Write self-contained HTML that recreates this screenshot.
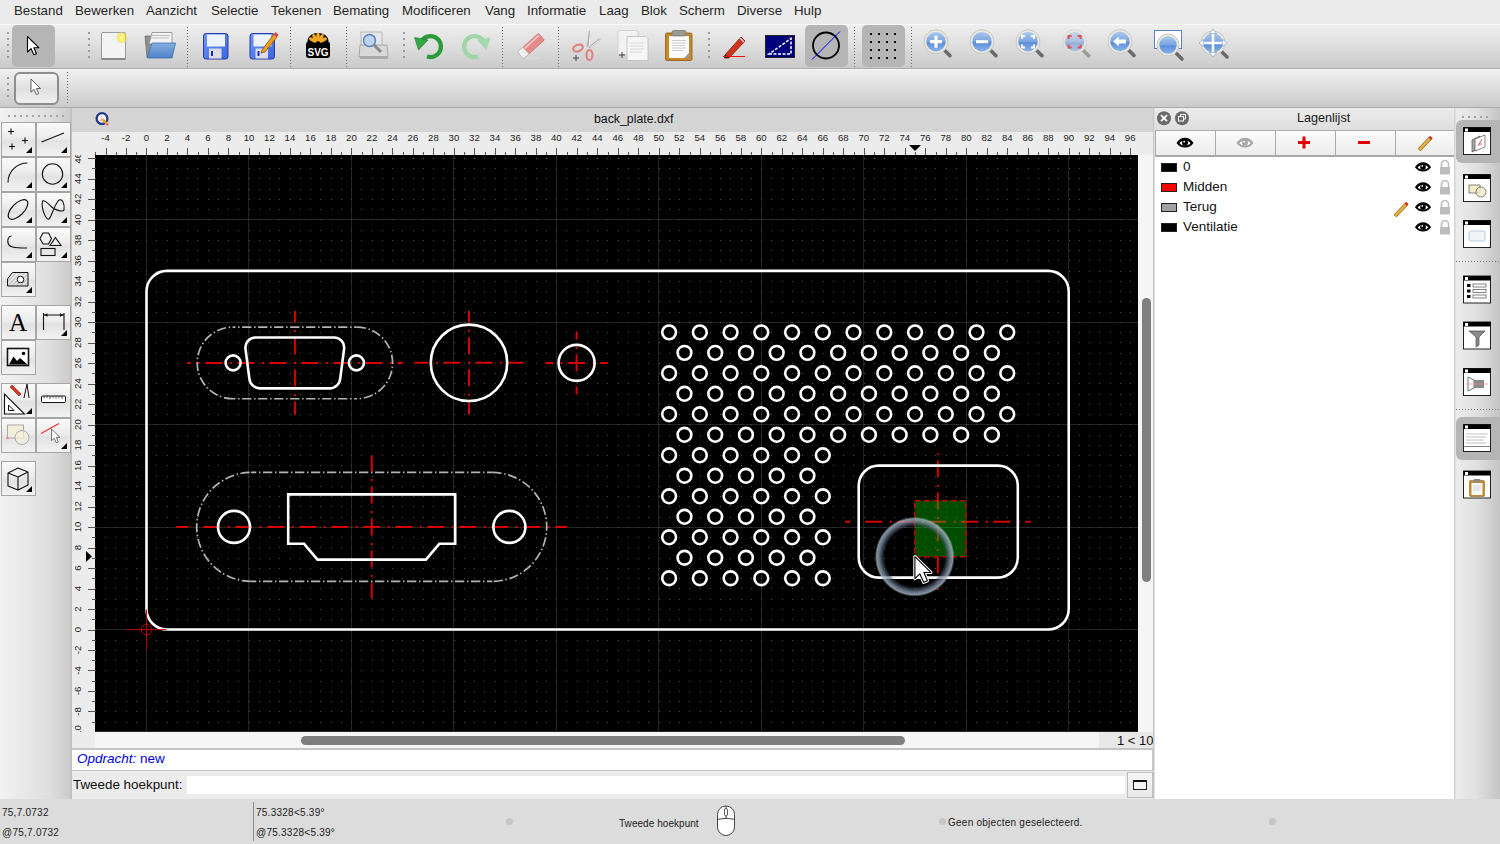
<!DOCTYPE html>
<html><head><meta charset="utf-8"><title>LibreCAD</title>
<style>
*{margin:0;padding:0;box-sizing:border-box}
html,body{width:1500px;height:844px;overflow:hidden;background:#ececec;font-family:"Liberation Sans",sans-serif;color:#111}
.a{position:absolute}
.menu{position:absolute;left:0;top:0;width:1500px;height:24px;background:#ebebeb}
.menu span{position:absolute;top:3px;font-size:13.3px;color:#262626}
.tb{position:absolute;left:0;width:1500px;background:linear-gradient(#eeeeee,#e3e3e3 35%,#cacaca);border-bottom:1px solid #aaaaaa;border-top:1px solid #f8f8f8}
.grip{position:absolute;width:2px;background:repeating-linear-gradient(#9c9c9c 0 2px,transparent 2px 6px)}
.sep{position:absolute;width:1px;background:repeating-linear-gradient(#6a6a6a 0 1px,transparent 1px 3px)}
.pressed{position:absolute;background:#b5b5b5;border-radius:5px}
.ic{position:absolute}
.lbtn{position:absolute;width:35px;height:35px;border:1px solid #a5a5a5;background:linear-gradient(#fafafa,#ececec 45%,#e2e2e2 55%,#f2f2f2)}
.tri:after{content:"";position:absolute;right:3px;bottom:3px;border-style:solid;border-width:0 0 6px 6px;border-color:transparent transparent #000 transparent}
.st{position:absolute;font-size:10px;color:#222;white-space:nowrap;letter-spacing:0.25px}
</style></head><body>
<div class="menu"><span style="left:14px">Bestand</span><span style="left:75px">Bewerken</span><span style="left:146px">Aanzicht</span><span style="left:211px">Selectie</span><span style="left:271px">Tekenen</span><span style="left:333px">Bemating</span><span style="left:402px">Modificeren</span><span style="left:485px">Vang</span><span style="left:527px">Informatie</span><span style="left:599px">Laag</span><span style="left:641px">Blok</span><span style="left:679px">Scherm</span><span style="left:737px">Diverse</span><span style="left:794px">Hulp</span></div><div class="tb" style="top:24px;height:45px"></div><div class="tb" style="top:69px;height:39px"></div><div class="grip" style="left:7px;top:32px;height:27px"></div><div class="grip" style="left:88px;top:32px;height:27px"></div><div class="grip" style="left:7px;top:77px;height:21px"></div><div class="sep" style="left:187px;top:27px;height:40px"></div><div class="sep" style="left:290px;top:27px;height:40px"></div><div class="sep" style="left:346px;top:27px;height:40px"></div><div class="sep" style="left:502px;top:27px;height:40px"></div><div class="sep" style="left:558px;top:27px;height:40px"></div><div class="sep" style="left:854px;top:27px;height:40px"></div><div class="sep" style="left:911px;top:27px;height:40px"></div><div class="grip" style="left:403px;top:32px;height:27px"></div><div class="grip" style="left:708px;top:32px;height:27px"></div><div class="sep" style="left:67px;top:72px;height:33px"></div><div class="pressed" style="left:12px;top:25px;width:43px;height:42px"></div><div class="pressed" style="left:805px;top:25px;width:43px;height:42px"></div><div class="pressed" style="left:862px;top:25px;width:43px;height:42px"></div><div class="a" style="left:14px;top:72px;width:45px;height:33px;border:2px solid #8e8e8e;border-radius:6px;background:linear-gradient(#f4f4f4,#e0e0e0 50%,#f0f0f0)"></div><svg class="a" style="left:0;top:24px" width="1500" height="84" viewBox="0 24 1500 84"><defs>
<linearGradient id="blue" x1="0" y1="0" x2="0" y2="1"><stop offset="0" stop-color="#a9c6ee"/><stop offset="0.5" stop-color="#7aa5e0"/><stop offset="0.55" stop-color="#5b8dd6"/><stop offset="1" stop-color="#8ab3ea"/></linearGradient>
<linearGradient id="flop" x1="0" y1="0" x2="1" y2="1"><stop offset="0" stop-color="#6f97f5"/><stop offset="1" stop-color="#3c64e0"/></linearGradient>
<linearGradient id="fold" x1="0" y1="0" x2="0" y2="1"><stop offset="0" stop-color="#86aee0"/><stop offset="1" stop-color="#4f82c8"/></linearGradient>
</defs><path transform="translate(27.5 36.5) scale(1.0)" d="M0 0V15.5L3.6 12.2L6.3 18.3L9 17.2L6.4 11.2H11.3Z" fill="#fff" stroke="#000" stroke-width="1.1" stroke-linejoin="round"/><path transform="translate(31 79) scale(0.85)" d="M0 0V15.5L3.6 12.2L6.3 18.3L9 17.2L6.4 11.2H11.3Z" fill="#fff" stroke="#444" stroke-width="1" stroke-linejoin="round"/><rect x="101.5" y="32.5" width="24" height="27" rx="1.5" fill="#f3f3f3" stroke="#9a9a9a"/><rect x="101.5" y="58" width="24" height="2" fill="#8a8a8a"/><circle cx="121.7" cy="37.7" r="5.5" fill="#f4e43a" opacity="0.55"/><circle cx="121.7" cy="37.7" r="3.2" fill="#f8f060"/><circle cx="121.7" cy="37.7" r="1.5" fill="#fffbd0"/><path d="M145 36H155L157 38V57H147Z" fill="#8f8f8f" stroke="#6e6e6e" stroke-width="0.8"/><path d="M152 32.5H172V44H149Z" fill="#f4f4f4" stroke="#8a8a8a" stroke-width="0.8"/><path d="M150 35.5H170M150 38H169" stroke="#bbb" stroke-width="1.2"/><path d="M152 43H175.5L172 58H147Z" fill="url(#fold)" stroke="#3f6fb0" stroke-width="0.8"/><rect x="203.5" y="33.5" width="24.5" height="25.5" rx="2.5" fill="url(#flop)" stroke="#2a3aa8" stroke-width="1"/><rect x="207" y="34.5" width="18" height="12" fill="#eef2fb"/><rect x="209" y="48.5" width="12.5" height="10" fill="#dcdde6"/><rect x="211" y="51" width="2" height="5" fill="#1a2ad0"/><rect x="250.0" y="33.5" width="24.5" height="25.5" rx="2.5" fill="url(#flop)" stroke="#2a3aa8" stroke-width="1"/><rect x="253.5" y="34.5" width="18" height="12" fill="#eef2fb"/><rect x="255.5" y="48.5" width="12.5" height="10" fill="#dcdde6"/><rect x="257.5" y="51" width="2" height="5" fill="#1a2ad0"/><path d="M262 50L274 34L277 37L265 52L261 53Z" fill="#f0a020" stroke="#8a4a10" stroke-width="0.8"/><path d="M274 34L277 37L278.5 35L275.5 32Z" fill="#e04040"/><ellipse cx="318" cy="41" rx="10.5" ry="8" fill="#000"/><rect x="306" y="41.5" width="24" height="16.5" rx="3" fill="#000"/><ellipse cx="318" cy="37" rx="1.8" ry="4.2" fill="#f5a623" transform="rotate(-60 318 43)"/><ellipse cx="318" cy="37" rx="1.8" ry="4.2" fill="#f5a623" transform="rotate(-30 318 43)"/><ellipse cx="318" cy="37" rx="1.8" ry="4.2" fill="#f5a623" transform="rotate(0 318 43)"/><ellipse cx="318" cy="37" rx="1.8" ry="4.2" fill="#f5a623" transform="rotate(30 318 43)"/><ellipse cx="318" cy="37" rx="1.8" ry="4.2" fill="#f5a623" transform="rotate(60 318 43)"/><text x="318" y="56" font-family="Liberation Sans, sans-serif" font-weight="bold" font-size="11.5" fill="#fff" text-anchor="middle" textLength="21" lengthAdjust="spacingAndGlyphs">SVG</text><rect x="361" y="32" width="21" height="14" fill="#e6e6e6" stroke="#aaa" stroke-width="0.8"/><path d="M360 45H387L388 57H359Z" fill="#d8d8d8" stroke="#999" stroke-width="0.8"/><rect x="360" y="56" width="28" height="3" fill="#aaa"/><circle cx="369.5" cy="40.5" r="6" fill="#bcd4f2" stroke="#5a80c0" stroke-width="1.5"/><path d="M374 45L381 52" stroke="#888" stroke-width="3"/><path d="M421 42A10.5 10.5 0 1 1 427 56.5" fill="none" stroke="#2a9a3a" stroke-width="4.2"/><path d="M414.5 37.5L428 40L418.5 50Z" fill="#35a845" stroke="#1e7a2a" stroke-width="0.6"/><path d="M484 42A10.5 10.5 0 1 0 478 56.5" fill="none" stroke="#9ed4a8" stroke-width="4.2"/><path d="M490.5 37.5L477 40L486.5 50Z" fill="#a6d8b0"/><g transform="rotate(-42 531 46)"><rect x="517" y="41.5" width="28" height="9" rx="1" fill="#e58a8a" stroke="#c97a7a" stroke-width="0.8"/><rect x="517" y="41.5" width="7" height="9" fill="#f2f2f2" stroke="#bbb" stroke-width="0.6"/><path d="M525 43.5H544" stroke="#f6c8c8" stroke-width="1.6"/></g><ellipse cx="533" cy="58" rx="9" ry="0.9" fill="#d8d8d8"/><path d="M590 31L588 47M600 39L589 48" stroke="#aaa" stroke-width="2.2"/><path d="M590.5 31L589 47M600 39.5L590 47.5" stroke="#f4f4f4" stroke-width="1"/><ellipse cx="578" cy="48" rx="5" ry="3.2" fill="none" stroke="#e08080" stroke-width="2.2" transform="rotate(-20 578 48)"/><ellipse cx="589.5" cy="55" rx="3" ry="5" fill="none" stroke="#e08080" stroke-width="2.2"/><path d="M573 58H579M576 55V61" stroke="#444" stroke-width="1"/><rect x="618" y="30.5" width="20" height="24" rx="1.5" fill="#f2f2f2" stroke="#ccc" stroke-width="0.8"/><path d="M627 36.5H646L648 38.5V60.5H627Z" fill="#f6f6f6" stroke="#bbb" stroke-width="0.8"/><path d="M630 43H644M630 46H644M630 49H644M630 52H642" stroke="#d0d0d0" stroke-width="0.8"/><path d="M619 55H625M622 52V58" stroke="#444" stroke-width="1"/><rect x="665.5" y="33" width="26.5" height="27.5" rx="1.5" fill="#c4892c" stroke="#8a5a10" stroke-width="0.8"/><rect x="669" y="36" width="20" height="22" fill="#fafafa"/><rect x="672" y="30.5" width="14" height="5.5" rx="1.5" fill="#9a9a90" stroke="#666" stroke-width="0.6"/><path d="M672 40.5H686M672 43H686M672 45.5H685M672 48H686M672 50.5H683" stroke="#c8c8c8" stroke-width="0.9"/><path d="M689 53L689 58L684 58Z" fill="#999"/><path d="M725 55L741 37L745 41L729 58L724.5 58Z" fill="#d63020" stroke="#7a2a10" stroke-width="0.9"/><path d="M724.5 58L725 54L729 58Z" fill="#222"/><path d="M740 38L744 42" stroke="#ddd" stroke-width="1.5"/><path d="M723 56.5H745" stroke="#f01010" stroke-width="1"/><rect x="765.5" y="35.5" width="29" height="22" fill="#00007d" stroke="#222" stroke-width="1"/><path d="M769 54H791V38.5Z" fill="none" stroke="#fff" stroke-width="1.5" stroke-dasharray="3 1.5"/><circle cx="826" cy="45.5" r="13" fill="none" stroke="#000" stroke-width="1.8"/><path d="M812 59.5L840 31.5" stroke="#0000ff" stroke-width="1"/><path d="M870 33h2v2h-2zM870 41h2v2h-2zM870 49h2v2h-2zM870 57h2v2h-2zM878 33h2v2h-2zM878 41h2v2h-2zM878 49h2v2h-2zM878 57h2v2h-2zM886 33h2v2h-2zM886 41h2v2h-2zM886 49h2v2h-2zM886 57h2v2h-2zM894 33h2v2h-2zM894 41h2v2h-2zM894 49h2v2h-2zM894 57h2v2h-2z" fill="#000"/><g><path d="M944 49.7L950 55.7" stroke="#6a6a6a" stroke-width="3.6" stroke-linecap="round"/><circle cx="936" cy="41.7" r="12.0" fill="#e8e8e0" stroke="#c8c8c0" stroke-width="1"/><circle cx="936" cy="41.7" r="9.7" fill="url(#blue)"/></g><path d="M930 41.7H942M936 35.7V47.7" stroke="#fff" stroke-width="3.2"/><g><path d="M990 49.7L996 55.7" stroke="#6a6a6a" stroke-width="3.6" stroke-linecap="round"/><circle cx="982" cy="41.7" r="12.0" fill="#e8e8e0" stroke="#c8c8c0" stroke-width="1"/><circle cx="982" cy="41.7" r="9.7" fill="url(#blue)"/></g><path d="M976 41.7H988" stroke="#fff" stroke-width="3"/><g><path d="M1036 49.7L1042 55.7" stroke="#6a6a6a" stroke-width="3.6" stroke-linecap="round"/><circle cx="1028" cy="41.7" r="12.0" fill="#e8e8e0" stroke="#c8c8c0" stroke-width="1"/><circle cx="1028" cy="41.7" r="9.7" fill="url(#blue)"/></g><path d="M1022 39V36H1025M1031 36H1034V39M1034 44.5V47.5H1031M1025 47.5H1022V44.5" fill="none" stroke="#fff" stroke-width="2"/><g opacity="0.55"><path d="M1082.6 49.7L1088.6 55.7" stroke="#6a6a6a" stroke-width="3.6" stroke-linecap="round"/><circle cx="1074.6" cy="41.7" r="12.0" fill="#e8e8e0" stroke="#c8c8c0" stroke-width="1"/><circle cx="1074.6" cy="41.7" r="9.7" fill="url(#blue)"/></g><path d="M1068.6 39V36H1071.6M1077.6 36H1080.6V39M1080.6 44.5V47.5H1077.6M1071.6 47.5H1068.6V44.5" fill="none" stroke="#e05050" stroke-width="2"/><g><path d="M1128 49.5L1134 55.5" stroke="#6a6a6a" stroke-width="3.6" stroke-linecap="round"/><circle cx="1120" cy="41.5" r="12.0" fill="#e8e8e0" stroke="#c8c8c0" stroke-width="1"/><circle cx="1120" cy="41.5" r="9.7" fill="url(#blue)"/></g><path d="M1113 41.5L1119 36.5V39.5H1126V43.5H1119V46.5Z" fill="#fff"/><rect x="1154.5" y="30.5" width="27" height="18" fill="#fff" stroke="#5a80c0" stroke-width="1"/><g><path d="M1176 53L1182 59" stroke="#6a6a6a" stroke-width="3.6" stroke-linecap="round"/><circle cx="1168" cy="45" r="11.0" fill="#e8e8e0" stroke="#c8c8c0" stroke-width="1"/><circle cx="1168" cy="45" r="8.7" fill="url(#blue)"/></g><g><path d="M1221 51L1227 57" stroke="#6a6a6a" stroke-width="3.6" stroke-linecap="round"/><circle cx="1213" cy="43" r="12.0" fill="#e8e8e0" stroke="#c8c8c0" stroke-width="1"/><circle cx="1213" cy="43" r="9.7" fill="url(#blue)"/></g><path d="M1213 30V56M1200 43H1226" stroke="#fff" stroke-width="2.5"/><path d="M1213 29L1209.5 33.5H1216.5ZM1213 57L1209.5 52.5H1216.5ZM1199 43L1203.5 39.5V46.5ZM1227 43L1222.5 39.5V46.5Z" fill="#fff" stroke="#6a90d0" stroke-width="0.6"/></svg><div class="a" style="left:0;top:108px;width:72px;height:691px;background:linear-gradient(90deg,#f2f2f2,#dedede 70%,#c9c9c9)"></div><div class="a" style="left:70px;top:108px;width:2px;height:691px;background:#c2c2c2"></div><div class="a" style="left:8px;top:115px;width:56px;height:2px;background:repeating-linear-gradient(90deg,#a4a4a4 0 2px,transparent 2px 6px)"></div><div class="lbtn tri" style="left:1px;top:122px"></div><div class="lbtn tri" style="left:36px;top:122px"></div><div class="lbtn tri" style="left:1px;top:157px"></div><div class="lbtn tri" style="left:36px;top:157px"></div><div class="lbtn tri" style="left:1px;top:192px"></div><div class="lbtn tri" style="left:36px;top:192px"></div><div class="lbtn tri" style="left:1px;top:227px"></div><div class="lbtn tri" style="left:36px;top:227px"></div><div class="lbtn tri" style="left:1px;top:262px"></div><div class="lbtn" style="left:1px;top:305px"></div><div class="lbtn tri" style="left:36px;top:305px"></div><div class="lbtn" style="left:1px;top:340px"></div><div class="lbtn tri" style="left:1px;top:383px"></div><div class="lbtn" style="left:36px;top:383px"></div><div class="lbtn" style="left:1px;top:418px"></div><div class="lbtn tri" style="left:36px;top:418px"></div><div class="lbtn tri" style="left:1px;top:461px"></div><svg class="a" style="left:0;top:100px" width="72" height="400" viewBox="0 100 72 400"><path d="M8 131.5H14M11 128.5V134.5M22 140.5H28M25 137.5V143.5M9 146.5H15M12 143.5V149.5" fill="none" stroke="#111" stroke-width="1.1"/><path d="M41.5 142L64 133" fill="none" stroke="#111" stroke-width="1.1"/><path d="M8 182.5A19.5 19.5 0 0 1 27.5 163" fill="none" stroke="#111" stroke-width="1.1"/><circle cx="52.5" cy="174" r="10.2" fill="none" stroke="#111" stroke-width="1.1"/><ellipse cx="18" cy="209.5" rx="12.5" ry="6" transform="rotate(-45 18 209.5)" fill="none" stroke="#111" stroke-width="1.1"/><path d="M42.5 201C41 208 46 221 49 219C52 216 53 208 58 201C62 197 65 204 64 210C63 212 58 211 53 208C50 206 45 199 42.5 201Z" fill="none" stroke="#111" stroke-width="1.1"/><path d="M11.5 236C8 236 7.5 240 8 243C9 247 13 248 27 248" fill="none" stroke="#111" stroke-width="1.1"/><path d="M43 233L48.5 233L51.5 238.5L48.5 244H43L40 238.5Z" fill="none" stroke="#111" stroke-width="1.1"/><path d="M55.5 237.5L61 245.5H50Z" fill="none" stroke="#111" stroke-width="1.1"/><rect x="41" y="248.5" width="14" height="7" fill="none" stroke="#111" stroke-width="1.1"/><defs><pattern id="hp" width="3" height="3" patternUnits="userSpaceOnUse" patternTransform="rotate(45)"><path d="M0 0V3" stroke="#666" stroke-width="0.7"/></pattern></defs><path d="M7.5 286H28V272.5H12.5L7.5 279Z" fill="url(#hp)" stroke="#111" stroke-width="1"/><circle cx="20.5" cy="279.5" r="3.3" fill="#fff" stroke="#111" stroke-width="1"/><text x="18" y="331" font-family="Liberation Serif, serif" font-size="25" text-anchor="middle" fill="#000">A</text><path d="M43.5 313V330M64 313V330M44 315H63.5" fill="none" stroke="#111" stroke-width="1.1"/><path d="M44 315L47.5 313.3V316.7ZM63.5 315L60 313.3V316.7Z" fill="#111"/><rect x="7.5" y="348.5" width="21" height="17" fill="#fff" stroke="#111" stroke-width="1.6"/><path d="M9 364.5L13.5 356.5L17 361L20 358L27.5 364.5Z" fill="#000"/><circle cx="23.5" cy="353.5" r="1.8" fill="#000"/><path d="M4.5 394V414H24.5Z" fill="#fff" stroke="#111" stroke-width="1.1"/><path d="M8.5 405V410.5H14Z" fill="none" stroke="#111" stroke-width="1"/><path d="M10 387L19 396L21 394L12 385Z" fill="#e03020" stroke="#802010" stroke-width="0.6"/><path d="M27 384L24 398M27 384L29 398" fill="none" stroke="#111" stroke-width="1"/><rect x="41.5" y="396" width="24" height="6.5" rx="1" fill="#fff" stroke="#111" stroke-width="1"/><path d="M44 396V398.5M47 396V398M50 396V399M53 396V398M56 396V398.5M59 396V398M62 396V399" stroke="#111" stroke-width="0.7"/><rect x="7.5" y="425" width="16" height="13" fill="#f4efdb" stroke="#aaa" stroke-width="1"/><circle cx="22" cy="437.5" r="7" fill="#f4efdb" fill-opacity="0.7" stroke="#aaa" stroke-width="1"/><circle cx="7.5" cy="438" r="1.2" fill="#f08080"/><path d="M41 433.5L59 423.5" stroke="#f03030" stroke-width="1.2"/><path transform="translate(51.5 429) scale(0.75)" d="M0 0V15.5L3.6 12.2L6.3 18.3L9 17.2L6.4 11.2H11.3Z" fill="#fff" stroke="#666" stroke-width="1.2" stroke-linejoin="round"/><path d="M8 473L18 468L28 472V485L18 490L8 486Z M8 473L18 477L28 472 M18 477V490" fill="none" stroke="#111" stroke-width="1.1" stroke-linejoin="round"/></svg><div class="a" style="left:72px;top:108px;width:1082px;height:24px;background:#d4d4d4"></div><div class="a" style="left:72px;top:132px;width:1082px;height:23px;background:#ececec"></div><div class="a" style="left:72px;top:155px;width:23px;height:595px;background:#ececec"></div><div class="a" style="left:95px;top:732px;width:1059px;height:17px;background:#f5f5f5"></div><div class="a" style="left:1138px;top:155px;width:16px;height:577px;background:#f5f5f5"></div><div class="a" style="left:72px;top:748px;width:1082px;height:2px;background:#c4c4c4"></div><div class="a" style="left:1099px;top:732px;width:55px;height:16px;background:#e8e8e8"></div><div class="st" style="left:1117px;top:733px;font-size:13px;color:#111;letter-spacing:0">1 &lt; 10</div><div class="a" style="left:301px;top:736px;width:604px;height:9px;border-radius:5px;background:#7f7f7f"></div><div class="a" style="left:1142px;top:298px;width:9px;height:284px;border-radius:5px;background:#7f7f7f"></div><div class="st" style="left:594px;top:112px;font-size:12.3px;color:#111;letter-spacing:0">back_plate.dxf</div><svg class="a" style="left:72px;top:132px" width="1082" height="600" viewBox="72 132 1082 600"><g font-family="Liberation Sans, sans-serif" font-size="9.6" fill="#222" text-anchor="middle"><text x="105.51" y="141">-4</text><text x="126.01" y="141">-2</text><text x="146.5" y="141">0</text><text x="166.99" y="141">2</text><text x="187.49" y="141">4</text><text x="207.98" y="141">6</text><text x="228.48" y="141">8</text><text x="248.97" y="141">10</text><text x="269.46" y="141">12</text><text x="289.96" y="141">14</text><text x="310.45" y="141">16</text><text x="330.95" y="141">18</text><text x="351.44" y="141">20</text><text x="371.93" y="141">22</text><text x="392.43" y="141">24</text><text x="412.92" y="141">26</text><text x="433.42" y="141">28</text><text x="453.91" y="141">30</text><text x="474.4" y="141">32</text><text x="494.9" y="141">34</text><text x="515.39" y="141">36</text><text x="535.89" y="141">38</text><text x="556.38" y="141">40</text><text x="576.87" y="141">42</text><text x="597.37" y="141">44</text><text x="617.86" y="141">46</text><text x="638.36" y="141">48</text><text x="658.85" y="141">50</text><text x="679.34" y="141">52</text><text x="699.84" y="141">54</text><text x="720.33" y="141">56</text><text x="740.83" y="141">58</text><text x="761.32" y="141">60</text><text x="781.81" y="141">62</text><text x="802.31" y="141">64</text><text x="822.8" y="141">66</text><text x="843.3" y="141">68</text><text x="863.79" y="141">70</text><text x="884.28" y="141">72</text><text x="904.78" y="141">74</text><text x="925.27" y="141">76</text><text x="945.77" y="141">78</text><text x="966.26" y="141">80</text><text x="986.75" y="141">82</text><text x="1007.25" y="141">84</text><text x="1027.74" y="141">86</text><text x="1048.24" y="141">88</text><text x="1068.73" y="141">90</text><text x="1089.22" y="141">92</text><text x="1109.72" y="141">94</text><text x="1130.21" y="141">96</text></g><path d="M95.5 152V155M106.5 148V155M116.5 152V155M126.5 148V155M136.5 152V155M146.5 148V155M157.5 152V155M167.5 148V155M177.5 152V155M187.5 148V155M198.5 152V155M208.5 148V155M218.5 152V155M228.5 148V155M239.5 152V155M249.5 148V155M259.5 152V155M269.5 148V155M280.5 152V155M290.5 148V155M300.5 152V155M310.5 148V155M321.5 152V155M331.5 148V155M341.5 152V155M351.5 148V155M362.5 152V155M372.5 148V155M382.5 152V155M392.5 148V155M403.5 152V155M413.5 148V155M423.5 152V155M433.5 148V155M444.5 152V155M454.5 148V155M464.5 152V155M474.5 148V155M485.5 152V155M495.5 148V155M505.5 152V155M515.5 148V155M526.5 152V155M536.5 148V155M546.5 152V155M556.5 148V155M567.5 152V155M577.5 148V155M587.5 152V155M597.5 148V155M608.5 152V155M618.5 148V155M628.5 152V155M638.5 148V155M649.5 152V155M659.5 148V155M669.5 152V155M679.5 148V155M690.5 152V155M700.5 148V155M710.5 152V155M720.5 148V155M731.5 152V155M741.5 148V155M751.5 152V155M761.5 148V155M772.5 152V155M782.5 148V155M792.5 152V155M802.5 148V155M813.5 152V155M823.5 148V155M833.5 152V155M843.5 148V155M854.5 152V155M864.5 148V155M874.5 152V155M884.5 148V155M895.5 152V155M905.5 148V155M915.5 152V155M925.5 148V155M936.5 152V155M946.5 148V155M956.5 152V155M966.5 148V155M977.5 152V155M987.5 148V155M997.5 152V155M1007.5 148V155M1017.5 152V155M1028.5 148V155M1038.5 152V155M1048.5 148V155M1058.5 152V155M1069.5 148V155M1079.5 152V155M1089.5 148V155M1099.5 152V155M1110.5 148V155M1120.5 152V155M1130.5 148V155M92 722.5H95M88 711.5H95M92 701.5H95M88 691.5H95M92 681.5H95M88 670.5H95M92 660.5H95M88 650.5H95M92 640.5H95M88 630.5H95M92 619.5H95M88 609.5H95M92 599.5H95M88 589.5H95M92 578.5H95M88 568.5H95M92 558.5H95M88 548.5H95M92 537.5H95M88 527.5H95M92 517.5H95M88 507.5H95M92 496.5H95M88 486.5H95M92 476.5H95M88 466.5H95M92 455.5H95M88 445.5H95M92 435.5H95M88 425.5H95M92 414.5H95M88 404.5H95M92 394.5H95M88 384.5H95M92 373.5H95M88 363.5H95M92 353.5H95M88 343.5H95M92 332.5H95M88 322.5H95M92 312.5H95M88 302.5H95M92 291.5H95M88 281.5H95M92 271.5H95M88 261.5H95M92 250.5H95M88 240.5H95M92 230.5H95M88 220.5H95M92 209.5H95M88 199.5H95M92 189.5H95M88 179.5H95M92 168.5H95M88 158.5H95" stroke="#555" stroke-width="1" fill="none"/><svg x="72" y="155" width="23" height="577" viewBox="72 155 23 577"><g font-family="Liberation Sans, sans-serif" font-size="9.6" fill="#222" text-anchor="middle"><text transform="translate(80.8 731.97) rotate(-90)">-10</text><text transform="translate(80.8 711.48) rotate(-90)">-8</text><text transform="translate(80.8 690.98) rotate(-90)">-6</text><text transform="translate(80.8 670.49) rotate(-90)">-4</text><text transform="translate(80.8 649.99) rotate(-90)">-2</text><text transform="translate(80.8 629.5) rotate(-90)">0</text><text transform="translate(80.8 609.01) rotate(-90)">2</text><text transform="translate(80.8 588.51) rotate(-90)">4</text><text transform="translate(80.8 568.02) rotate(-90)">6</text><text transform="translate(80.8 547.52) rotate(-90)">8</text><text transform="translate(80.8 527.03) rotate(-90)">10</text><text transform="translate(80.8 506.54) rotate(-90)">12</text><text transform="translate(80.8 486.04) rotate(-90)">14</text><text transform="translate(80.8 465.55) rotate(-90)">16</text><text transform="translate(80.8 445.05) rotate(-90)">18</text><text transform="translate(80.8 424.56) rotate(-90)">20</text><text transform="translate(80.8 404.07) rotate(-90)">22</text><text transform="translate(80.8 383.57) rotate(-90)">24</text><text transform="translate(80.8 363.08) rotate(-90)">26</text><text transform="translate(80.8 342.58) rotate(-90)">28</text><text transform="translate(80.8 322.09) rotate(-90)">30</text><text transform="translate(80.8 301.6) rotate(-90)">32</text><text transform="translate(80.8 281.1) rotate(-90)">34</text><text transform="translate(80.8 260.61) rotate(-90)">36</text><text transform="translate(80.8 240.11) rotate(-90)">38</text><text transform="translate(80.8 219.62) rotate(-90)">40</text><text transform="translate(80.8 199.13) rotate(-90)">42</text><text transform="translate(80.8 178.63) rotate(-90)">44</text><text transform="translate(80.8 158.14) rotate(-90)">46</text></g></svg><rect x="95" y="155" width="1043" height="577" fill="#000"/><svg x="95" y="155" width="1043" height="577" viewBox="95 155 1043 577"><path d="M146.5 155V732M248.5 155V732M351.5 155V732M453.5 155V732M556.5 155V732M658.5 155V732M761.5 155V732M863.5 155V732M966.5 155V732M1068.5 155V732M95 731.5H1138M95 629.5H1138M95 527.5H1138M95 424.5H1138M95 322.5H1138M95 219.5H1138" stroke="#242424" stroke-width="1" fill="none"/><path d="M95 722.5h1m9 0h1m9 0h1m10 0h1m9 0h1m9 0h1m9 0h1m10 0h1m9 0h1m9 0h1m9 0h1m10 0h1m9 0h1m9 0h1m9 0h1m10 0h1m9 0h1m9 0h1m9 0h1m10 0h1m9 0h1m9 0h1m9 0h1m10 0h1m9 0h1m9 0h1m9 0h1m10 0h1m9 0h1m9 0h1m9 0h1m10 0h1m9 0h1m9 0h1m9 0h1m10 0h1m9 0h1m9 0h1m9 0h1m10 0h1m9 0h1m9 0h1m9 0h1m10 0h1m9 0h1m9 0h1m9 0h1m10 0h1m9 0h1m9 0h1m9 0h1m10 0h1m9 0h1m9 0h1m9 0h1m10 0h1m9 0h1m9 0h1m9 0h1m10 0h1m9 0h1m9 0h1m9 0h1m10 0h1m9 0h1m9 0h1m9 0h1m10 0h1m9 0h1m9 0h1m9 0h1m10 0h1m9 0h1m9 0h1m9 0h1m10 0h1m9 0h1m9 0h1m9 0h1m10 0h1m9 0h1m9 0h1m9 0h1m10 0h1m9 0h1m9 0h1m9 0h1m10 0h1m9 0h1m9 0h1m9 0h1m10 0h1m9 0h1m9 0h1m9 0h1m10 0h1m9 0h1m9 0h1m9 0h1m10 0h1m9 0h1m9 0h1M95 711.5h1m9 0h1m9 0h1m10 0h1m9 0h1m9 0h1m9 0h1m10 0h1m9 0h1m9 0h1m9 0h1m10 0h1m9 0h1m9 0h1m9 0h1m10 0h1m9 0h1m9 0h1m9 0h1m10 0h1m9 0h1m9 0h1m9 0h1m10 0h1m9 0h1m9 0h1m9 0h1m10 0h1m9 0h1m9 0h1m9 0h1m10 0h1m9 0h1m9 0h1m9 0h1m10 0h1m9 0h1m9 0h1m9 0h1m10 0h1m9 0h1m9 0h1m9 0h1m10 0h1m9 0h1m9 0h1m9 0h1m10 0h1m9 0h1m9 0h1m9 0h1m10 0h1m9 0h1m9 0h1m9 0h1m10 0h1m9 0h1m9 0h1m9 0h1m10 0h1m9 0h1m9 0h1m9 0h1m10 0h1m9 0h1m9 0h1m9 0h1m10 0h1m9 0h1m9 0h1m9 0h1m10 0h1m9 0h1m9 0h1m9 0h1m10 0h1m9 0h1m9 0h1m9 0h1m10 0h1m9 0h1m9 0h1m9 0h1m10 0h1m9 0h1m9 0h1m9 0h1m10 0h1m9 0h1m9 0h1m9 0h1m10 0h1m9 0h1m9 0h1m9 0h1m10 0h1m9 0h1m9 0h1m9 0h1m10 0h1m9 0h1m9 0h1M95 701.5h1m9 0h1m9 0h1m10 0h1m9 0h1m9 0h1m9 0h1m10 0h1m9 0h1m9 0h1m9 0h1m10 0h1m9 0h1m9 0h1m9 0h1m10 0h1m9 0h1m9 0h1m9 0h1m10 0h1m9 0h1m9 0h1m9 0h1m10 0h1m9 0h1m9 0h1m9 0h1m10 0h1m9 0h1m9 0h1m9 0h1m10 0h1m9 0h1m9 0h1m9 0h1m10 0h1m9 0h1m9 0h1m9 0h1m10 0h1m9 0h1m9 0h1m9 0h1m10 0h1m9 0h1m9 0h1m9 0h1m10 0h1m9 0h1m9 0h1m9 0h1m10 0h1m9 0h1m9 0h1m9 0h1m10 0h1m9 0h1m9 0h1m9 0h1m10 0h1m9 0h1m9 0h1m9 0h1m10 0h1m9 0h1m9 0h1m9 0h1m10 0h1m9 0h1m9 0h1m9 0h1m10 0h1m9 0h1m9 0h1m9 0h1m10 0h1m9 0h1m9 0h1m9 0h1m10 0h1m9 0h1m9 0h1m9 0h1m10 0h1m9 0h1m9 0h1m9 0h1m10 0h1m9 0h1m9 0h1m9 0h1m10 0h1m9 0h1m9 0h1m9 0h1m10 0h1m9 0h1m9 0h1m9 0h1m10 0h1m9 0h1m9 0h1M95 691.5h1m9 0h1m9 0h1m10 0h1m9 0h1m9 0h1m9 0h1m10 0h1m9 0h1m9 0h1m9 0h1m10 0h1m9 0h1m9 0h1m9 0h1m10 0h1m9 0h1m9 0h1m9 0h1m10 0h1m9 0h1m9 0h1m9 0h1m10 0h1m9 0h1m9 0h1m9 0h1m10 0h1m9 0h1m9 0h1m9 0h1m10 0h1m9 0h1m9 0h1m9 0h1m10 0h1m9 0h1m9 0h1m9 0h1m10 0h1m9 0h1m9 0h1m9 0h1m10 0h1m9 0h1m9 0h1m9 0h1m10 0h1m9 0h1m9 0h1m9 0h1m10 0h1m9 0h1m9 0h1m9 0h1m10 0h1m9 0h1m9 0h1m9 0h1m10 0h1m9 0h1m9 0h1m9 0h1m10 0h1m9 0h1m9 0h1m9 0h1m10 0h1m9 0h1m9 0h1m9 0h1m10 0h1m9 0h1m9 0h1m9 0h1m10 0h1m9 0h1m9 0h1m9 0h1m10 0h1m9 0h1m9 0h1m9 0h1m10 0h1m9 0h1m9 0h1m9 0h1m10 0h1m9 0h1m9 0h1m9 0h1m10 0h1m9 0h1m9 0h1m9 0h1m10 0h1m9 0h1m9 0h1m9 0h1m10 0h1m9 0h1m9 0h1M95 681.5h1m9 0h1m9 0h1m10 0h1m9 0h1m9 0h1m9 0h1m10 0h1m9 0h1m9 0h1m9 0h1m10 0h1m9 0h1m9 0h1m9 0h1m10 0h1m9 0h1m9 0h1m9 0h1m10 0h1m9 0h1m9 0h1m9 0h1m10 0h1m9 0h1m9 0h1m9 0h1m10 0h1m9 0h1m9 0h1m9 0h1m10 0h1m9 0h1m9 0h1m9 0h1m10 0h1m9 0h1m9 0h1m9 0h1m10 0h1m9 0h1m9 0h1m9 0h1m10 0h1m9 0h1m9 0h1m9 0h1m10 0h1m9 0h1m9 0h1m9 0h1m10 0h1m9 0h1m9 0h1m9 0h1m10 0h1m9 0h1m9 0h1m9 0h1m10 0h1m9 0h1m9 0h1m9 0h1m10 0h1m9 0h1m9 0h1m9 0h1m10 0h1m9 0h1m9 0h1m9 0h1m10 0h1m9 0h1m9 0h1m9 0h1m10 0h1m9 0h1m9 0h1m9 0h1m10 0h1m9 0h1m9 0h1m9 0h1m10 0h1m9 0h1m9 0h1m9 0h1m10 0h1m9 0h1m9 0h1m9 0h1m10 0h1m9 0h1m9 0h1m9 0h1m10 0h1m9 0h1m9 0h1m9 0h1m10 0h1m9 0h1m9 0h1M95 670.5h1m9 0h1m9 0h1m10 0h1m9 0h1m9 0h1m9 0h1m10 0h1m9 0h1m9 0h1m9 0h1m10 0h1m9 0h1m9 0h1m9 0h1m10 0h1m9 0h1m9 0h1m9 0h1m10 0h1m9 0h1m9 0h1m9 0h1m10 0h1m9 0h1m9 0h1m9 0h1m10 0h1m9 0h1m9 0h1m9 0h1m10 0h1m9 0h1m9 0h1m9 0h1m10 0h1m9 0h1m9 0h1m9 0h1m10 0h1m9 0h1m9 0h1m9 0h1m10 0h1m9 0h1m9 0h1m9 0h1m10 0h1m9 0h1m9 0h1m9 0h1m10 0h1m9 0h1m9 0h1m9 0h1m10 0h1m9 0h1m9 0h1m9 0h1m10 0h1m9 0h1m9 0h1m9 0h1m10 0h1m9 0h1m9 0h1m9 0h1m10 0h1m9 0h1m9 0h1m9 0h1m10 0h1m9 0h1m9 0h1m9 0h1m10 0h1m9 0h1m9 0h1m9 0h1m10 0h1m9 0h1m9 0h1m9 0h1m10 0h1m9 0h1m9 0h1m9 0h1m10 0h1m9 0h1m9 0h1m9 0h1m10 0h1m9 0h1m9 0h1m9 0h1m10 0h1m9 0h1m9 0h1m9 0h1m10 0h1m9 0h1m9 0h1M95 660.5h1m9 0h1m9 0h1m10 0h1m9 0h1m9 0h1m9 0h1m10 0h1m9 0h1m9 0h1m9 0h1m10 0h1m9 0h1m9 0h1m9 0h1m10 0h1m9 0h1m9 0h1m9 0h1m10 0h1m9 0h1m9 0h1m9 0h1m10 0h1m9 0h1m9 0h1m9 0h1m10 0h1m9 0h1m9 0h1m9 0h1m10 0h1m9 0h1m9 0h1m9 0h1m10 0h1m9 0h1m9 0h1m9 0h1m10 0h1m9 0h1m9 0h1m9 0h1m10 0h1m9 0h1m9 0h1m9 0h1m10 0h1m9 0h1m9 0h1m9 0h1m10 0h1m9 0h1m9 0h1m9 0h1m10 0h1m9 0h1m9 0h1m9 0h1m10 0h1m9 0h1m9 0h1m9 0h1m10 0h1m9 0h1m9 0h1m9 0h1m10 0h1m9 0h1m9 0h1m9 0h1m10 0h1m9 0h1m9 0h1m9 0h1m10 0h1m9 0h1m9 0h1m9 0h1m10 0h1m9 0h1m9 0h1m9 0h1m10 0h1m9 0h1m9 0h1m9 0h1m10 0h1m9 0h1m9 0h1m9 0h1m10 0h1m9 0h1m9 0h1m9 0h1m10 0h1m9 0h1m9 0h1m9 0h1m10 0h1m9 0h1m9 0h1M95 650.5h1m9 0h1m9 0h1m10 0h1m9 0h1m9 0h1m9 0h1m10 0h1m9 0h1m9 0h1m9 0h1m10 0h1m9 0h1m9 0h1m9 0h1m10 0h1m9 0h1m9 0h1m9 0h1m10 0h1m9 0h1m9 0h1m9 0h1m10 0h1m9 0h1m9 0h1m9 0h1m10 0h1m9 0h1m9 0h1m9 0h1m10 0h1m9 0h1m9 0h1m9 0h1m10 0h1m9 0h1m9 0h1m9 0h1m10 0h1m9 0h1m9 0h1m9 0h1m10 0h1m9 0h1m9 0h1m9 0h1m10 0h1m9 0h1m9 0h1m9 0h1m10 0h1m9 0h1m9 0h1m9 0h1m10 0h1m9 0h1m9 0h1m9 0h1m10 0h1m9 0h1m9 0h1m9 0h1m10 0h1m9 0h1m9 0h1m9 0h1m10 0h1m9 0h1m9 0h1m9 0h1m10 0h1m9 0h1m9 0h1m9 0h1m10 0h1m9 0h1m9 0h1m9 0h1m10 0h1m9 0h1m9 0h1m9 0h1m10 0h1m9 0h1m9 0h1m9 0h1m10 0h1m9 0h1m9 0h1m9 0h1m10 0h1m9 0h1m9 0h1m9 0h1m10 0h1m9 0h1m9 0h1m9 0h1m10 0h1m9 0h1m9 0h1M95 640.5h1m9 0h1m9 0h1m10 0h1m9 0h1m9 0h1m9 0h1m10 0h1m9 0h1m9 0h1m9 0h1m10 0h1m9 0h1m9 0h1m9 0h1m10 0h1m9 0h1m9 0h1m9 0h1m10 0h1m9 0h1m9 0h1m9 0h1m10 0h1m9 0h1m9 0h1m9 0h1m10 0h1m9 0h1m9 0h1m9 0h1m10 0h1m9 0h1m9 0h1m9 0h1m10 0h1m9 0h1m9 0h1m9 0h1m10 0h1m9 0h1m9 0h1m9 0h1m10 0h1m9 0h1m9 0h1m9 0h1m10 0h1m9 0h1m9 0h1m9 0h1m10 0h1m9 0h1m9 0h1m9 0h1m10 0h1m9 0h1m9 0h1m9 0h1m10 0h1m9 0h1m9 0h1m9 0h1m10 0h1m9 0h1m9 0h1m9 0h1m10 0h1m9 0h1m9 0h1m9 0h1m10 0h1m9 0h1m9 0h1m9 0h1m10 0h1m9 0h1m9 0h1m9 0h1m10 0h1m9 0h1m9 0h1m9 0h1m10 0h1m9 0h1m9 0h1m9 0h1m10 0h1m9 0h1m9 0h1m9 0h1m10 0h1m9 0h1m9 0h1m9 0h1m10 0h1m9 0h1m9 0h1m9 0h1m10 0h1m9 0h1m9 0h1M95 629.5h1m9 0h1m9 0h1m10 0h1m9 0h1m9 0h1m9 0h1m10 0h1m9 0h1m9 0h1m9 0h1m10 0h1m9 0h1m9 0h1m9 0h1m10 0h1m9 0h1m9 0h1m9 0h1m10 0h1m9 0h1m9 0h1m9 0h1m10 0h1m9 0h1m9 0h1m9 0h1m10 0h1m9 0h1m9 0h1m9 0h1m10 0h1m9 0h1m9 0h1m9 0h1m10 0h1m9 0h1m9 0h1m9 0h1m10 0h1m9 0h1m9 0h1m9 0h1m10 0h1m9 0h1m9 0h1m9 0h1m10 0h1m9 0h1m9 0h1m9 0h1m10 0h1m9 0h1m9 0h1m9 0h1m10 0h1m9 0h1m9 0h1m9 0h1m10 0h1m9 0h1m9 0h1m9 0h1m10 0h1m9 0h1m9 0h1m9 0h1m10 0h1m9 0h1m9 0h1m9 0h1m10 0h1m9 0h1m9 0h1m9 0h1m10 0h1m9 0h1m9 0h1m9 0h1m10 0h1m9 0h1m9 0h1m9 0h1m10 0h1m9 0h1m9 0h1m9 0h1m10 0h1m9 0h1m9 0h1m9 0h1m10 0h1m9 0h1m9 0h1m9 0h1m10 0h1m9 0h1m9 0h1m9 0h1m10 0h1m9 0h1m9 0h1M95 619.5h1m9 0h1m9 0h1m10 0h1m9 0h1m9 0h1m9 0h1m10 0h1m9 0h1m9 0h1m9 0h1m10 0h1m9 0h1m9 0h1m9 0h1m10 0h1m9 0h1m9 0h1m9 0h1m10 0h1m9 0h1m9 0h1m9 0h1m10 0h1m9 0h1m9 0h1m9 0h1m10 0h1m9 0h1m9 0h1m9 0h1m10 0h1m9 0h1m9 0h1m9 0h1m10 0h1m9 0h1m9 0h1m9 0h1m10 0h1m9 0h1m9 0h1m9 0h1m10 0h1m9 0h1m9 0h1m9 0h1m10 0h1m9 0h1m9 0h1m9 0h1m10 0h1m9 0h1m9 0h1m9 0h1m10 0h1m9 0h1m9 0h1m9 0h1m10 0h1m9 0h1m9 0h1m9 0h1m10 0h1m9 0h1m9 0h1m9 0h1m10 0h1m9 0h1m9 0h1m9 0h1m10 0h1m9 0h1m9 0h1m9 0h1m10 0h1m9 0h1m9 0h1m9 0h1m10 0h1m9 0h1m9 0h1m9 0h1m10 0h1m9 0h1m9 0h1m9 0h1m10 0h1m9 0h1m9 0h1m9 0h1m10 0h1m9 0h1m9 0h1m9 0h1m10 0h1m9 0h1m9 0h1m9 0h1m10 0h1m9 0h1m9 0h1M95 609.5h1m9 0h1m9 0h1m10 0h1m9 0h1m9 0h1m9 0h1m10 0h1m9 0h1m9 0h1m9 0h1m10 0h1m9 0h1m9 0h1m9 0h1m10 0h1m9 0h1m9 0h1m9 0h1m10 0h1m9 0h1m9 0h1m9 0h1m10 0h1m9 0h1m9 0h1m9 0h1m10 0h1m9 0h1m9 0h1m9 0h1m10 0h1m9 0h1m9 0h1m9 0h1m10 0h1m9 0h1m9 0h1m9 0h1m10 0h1m9 0h1m9 0h1m9 0h1m10 0h1m9 0h1m9 0h1m9 0h1m10 0h1m9 0h1m9 0h1m9 0h1m10 0h1m9 0h1m9 0h1m9 0h1m10 0h1m9 0h1m9 0h1m9 0h1m10 0h1m9 0h1m9 0h1m9 0h1m10 0h1m9 0h1m9 0h1m9 0h1m10 0h1m9 0h1m9 0h1m9 0h1m10 0h1m9 0h1m9 0h1m9 0h1m10 0h1m9 0h1m9 0h1m9 0h1m10 0h1m9 0h1m9 0h1m9 0h1m10 0h1m9 0h1m9 0h1m9 0h1m10 0h1m9 0h1m9 0h1m9 0h1m10 0h1m9 0h1m9 0h1m9 0h1m10 0h1m9 0h1m9 0h1m9 0h1m10 0h1m9 0h1m9 0h1M95 599.5h1m9 0h1m9 0h1m10 0h1m9 0h1m9 0h1m9 0h1m10 0h1m9 0h1m9 0h1m9 0h1m10 0h1m9 0h1m9 0h1m9 0h1m10 0h1m9 0h1m9 0h1m9 0h1m10 0h1m9 0h1m9 0h1m9 0h1m10 0h1m9 0h1m9 0h1m9 0h1m10 0h1m9 0h1m9 0h1m9 0h1m10 0h1m9 0h1m9 0h1m9 0h1m10 0h1m9 0h1m9 0h1m9 0h1m10 0h1m9 0h1m9 0h1m9 0h1m10 0h1m9 0h1m9 0h1m9 0h1m10 0h1m9 0h1m9 0h1m9 0h1m10 0h1m9 0h1m9 0h1m9 0h1m10 0h1m9 0h1m9 0h1m9 0h1m10 0h1m9 0h1m9 0h1m9 0h1m10 0h1m9 0h1m9 0h1m9 0h1m10 0h1m9 0h1m9 0h1m9 0h1m10 0h1m9 0h1m9 0h1m9 0h1m10 0h1m9 0h1m9 0h1m9 0h1m10 0h1m9 0h1m9 0h1m9 0h1m10 0h1m9 0h1m9 0h1m9 0h1m10 0h1m9 0h1m9 0h1m9 0h1m10 0h1m9 0h1m9 0h1m9 0h1m10 0h1m9 0h1m9 0h1m9 0h1m10 0h1m9 0h1m9 0h1M95 588.5h1m9 0h1m9 0h1m10 0h1m9 0h1m9 0h1m9 0h1m10 0h1m9 0h1m9 0h1m9 0h1m10 0h1m9 0h1m9 0h1m9 0h1m10 0h1m9 0h1m9 0h1m9 0h1m10 0h1m9 0h1m9 0h1m9 0h1m10 0h1m9 0h1m9 0h1m9 0h1m10 0h1m9 0h1m9 0h1m9 0h1m10 0h1m9 0h1m9 0h1m9 0h1m10 0h1m9 0h1m9 0h1m9 0h1m10 0h1m9 0h1m9 0h1m9 0h1m10 0h1m9 0h1m9 0h1m9 0h1m10 0h1m9 0h1m9 0h1m9 0h1m10 0h1m9 0h1m9 0h1m9 0h1m10 0h1m9 0h1m9 0h1m9 0h1m10 0h1m9 0h1m9 0h1m9 0h1m10 0h1m9 0h1m9 0h1m9 0h1m10 0h1m9 0h1m9 0h1m9 0h1m10 0h1m9 0h1m9 0h1m9 0h1m10 0h1m9 0h1m9 0h1m9 0h1m10 0h1m9 0h1m9 0h1m9 0h1m10 0h1m9 0h1m9 0h1m9 0h1m10 0h1m9 0h1m9 0h1m9 0h1m10 0h1m9 0h1m9 0h1m9 0h1m10 0h1m9 0h1m9 0h1m9 0h1m10 0h1m9 0h1m9 0h1M95 578.5h1m9 0h1m9 0h1m10 0h1m9 0h1m9 0h1m9 0h1m10 0h1m9 0h1m9 0h1m9 0h1m10 0h1m9 0h1m9 0h1m9 0h1m10 0h1m9 0h1m9 0h1m9 0h1m10 0h1m9 0h1m9 0h1m9 0h1m10 0h1m9 0h1m9 0h1m9 0h1m10 0h1m9 0h1m9 0h1m9 0h1m10 0h1m9 0h1m9 0h1m9 0h1m10 0h1m9 0h1m9 0h1m9 0h1m10 0h1m9 0h1m9 0h1m9 0h1m10 0h1m9 0h1m9 0h1m9 0h1m10 0h1m9 0h1m9 0h1m9 0h1m10 0h1m9 0h1m9 0h1m9 0h1m10 0h1m9 0h1m9 0h1m9 0h1m10 0h1m9 0h1m9 0h1m9 0h1m10 0h1m9 0h1m9 0h1m9 0h1m10 0h1m9 0h1m9 0h1m9 0h1m10 0h1m9 0h1m9 0h1m9 0h1m10 0h1m9 0h1m9 0h1m9 0h1m10 0h1m9 0h1m9 0h1m9 0h1m10 0h1m9 0h1m9 0h1m9 0h1m10 0h1m9 0h1m9 0h1m9 0h1m10 0h1m9 0h1m9 0h1m9 0h1m10 0h1m9 0h1m9 0h1m9 0h1m10 0h1m9 0h1m9 0h1M95 568.5h1m9 0h1m9 0h1m10 0h1m9 0h1m9 0h1m9 0h1m10 0h1m9 0h1m9 0h1m9 0h1m10 0h1m9 0h1m9 0h1m9 0h1m10 0h1m9 0h1m9 0h1m9 0h1m10 0h1m9 0h1m9 0h1m9 0h1m10 0h1m9 0h1m9 0h1m9 0h1m10 0h1m9 0h1m9 0h1m9 0h1m10 0h1m9 0h1m9 0h1m9 0h1m10 0h1m9 0h1m9 0h1m9 0h1m10 0h1m9 0h1m9 0h1m9 0h1m10 0h1m9 0h1m9 0h1m9 0h1m10 0h1m9 0h1m9 0h1m9 0h1m10 0h1m9 0h1m9 0h1m9 0h1m10 0h1m9 0h1m9 0h1m9 0h1m10 0h1m9 0h1m9 0h1m9 0h1m10 0h1m9 0h1m9 0h1m9 0h1m10 0h1m9 0h1m9 0h1m9 0h1m10 0h1m9 0h1m9 0h1m9 0h1m10 0h1m9 0h1m9 0h1m9 0h1m10 0h1m9 0h1m9 0h1m9 0h1m10 0h1m9 0h1m9 0h1m9 0h1m10 0h1m9 0h1m9 0h1m9 0h1m10 0h1m9 0h1m9 0h1m9 0h1m10 0h1m9 0h1m9 0h1m9 0h1m10 0h1m9 0h1m9 0h1M95 558.5h1m9 0h1m9 0h1m10 0h1m9 0h1m9 0h1m9 0h1m10 0h1m9 0h1m9 0h1m9 0h1m10 0h1m9 0h1m9 0h1m9 0h1m10 0h1m9 0h1m9 0h1m9 0h1m10 0h1m9 0h1m9 0h1m9 0h1m10 0h1m9 0h1m9 0h1m9 0h1m10 0h1m9 0h1m9 0h1m9 0h1m10 0h1m9 0h1m9 0h1m9 0h1m10 0h1m9 0h1m9 0h1m9 0h1m10 0h1m9 0h1m9 0h1m9 0h1m10 0h1m9 0h1m9 0h1m9 0h1m10 0h1m9 0h1m9 0h1m9 0h1m10 0h1m9 0h1m9 0h1m9 0h1m10 0h1m9 0h1m9 0h1m9 0h1m10 0h1m9 0h1m9 0h1m9 0h1m10 0h1m9 0h1m9 0h1m9 0h1m10 0h1m9 0h1m9 0h1m9 0h1m10 0h1m9 0h1m9 0h1m9 0h1m10 0h1m9 0h1m9 0h1m9 0h1m10 0h1m9 0h1m9 0h1m9 0h1m10 0h1m9 0h1m9 0h1m9 0h1m10 0h1m9 0h1m9 0h1m9 0h1m10 0h1m9 0h1m9 0h1m9 0h1m10 0h1m9 0h1m9 0h1m9 0h1m10 0h1m9 0h1m9 0h1M95 547.5h1m9 0h1m9 0h1m10 0h1m9 0h1m9 0h1m9 0h1m10 0h1m9 0h1m9 0h1m9 0h1m10 0h1m9 0h1m9 0h1m9 0h1m10 0h1m9 0h1m9 0h1m9 0h1m10 0h1m9 0h1m9 0h1m9 0h1m10 0h1m9 0h1m9 0h1m9 0h1m10 0h1m9 0h1m9 0h1m9 0h1m10 0h1m9 0h1m9 0h1m9 0h1m10 0h1m9 0h1m9 0h1m9 0h1m10 0h1m9 0h1m9 0h1m9 0h1m10 0h1m9 0h1m9 0h1m9 0h1m10 0h1m9 0h1m9 0h1m9 0h1m10 0h1m9 0h1m9 0h1m9 0h1m10 0h1m9 0h1m9 0h1m9 0h1m10 0h1m9 0h1m9 0h1m9 0h1m10 0h1m9 0h1m9 0h1m9 0h1m10 0h1m9 0h1m9 0h1m9 0h1m10 0h1m9 0h1m9 0h1m9 0h1m10 0h1m9 0h1m9 0h1m9 0h1m10 0h1m9 0h1m9 0h1m9 0h1m10 0h1m9 0h1m9 0h1m9 0h1m10 0h1m9 0h1m9 0h1m9 0h1m10 0h1m9 0h1m9 0h1m9 0h1m10 0h1m9 0h1m9 0h1m9 0h1m10 0h1m9 0h1m9 0h1M95 537.5h1m9 0h1m9 0h1m10 0h1m9 0h1m9 0h1m9 0h1m10 0h1m9 0h1m9 0h1m9 0h1m10 0h1m9 0h1m9 0h1m9 0h1m10 0h1m9 0h1m9 0h1m9 0h1m10 0h1m9 0h1m9 0h1m9 0h1m10 0h1m9 0h1m9 0h1m9 0h1m10 0h1m9 0h1m9 0h1m9 0h1m10 0h1m9 0h1m9 0h1m9 0h1m10 0h1m9 0h1m9 0h1m9 0h1m10 0h1m9 0h1m9 0h1m9 0h1m10 0h1m9 0h1m9 0h1m9 0h1m10 0h1m9 0h1m9 0h1m9 0h1m10 0h1m9 0h1m9 0h1m9 0h1m10 0h1m9 0h1m9 0h1m9 0h1m10 0h1m9 0h1m9 0h1m9 0h1m10 0h1m9 0h1m9 0h1m9 0h1m10 0h1m9 0h1m9 0h1m9 0h1m10 0h1m9 0h1m9 0h1m9 0h1m10 0h1m9 0h1m9 0h1m9 0h1m10 0h1m9 0h1m9 0h1m9 0h1m10 0h1m9 0h1m9 0h1m9 0h1m10 0h1m9 0h1m9 0h1m9 0h1m10 0h1m9 0h1m9 0h1m9 0h1m10 0h1m9 0h1m9 0h1m9 0h1m10 0h1m9 0h1m9 0h1M95 527.5h1m9 0h1m9 0h1m10 0h1m9 0h1m9 0h1m9 0h1m10 0h1m9 0h1m9 0h1m9 0h1m10 0h1m9 0h1m9 0h1m9 0h1m10 0h1m9 0h1m9 0h1m9 0h1m10 0h1m9 0h1m9 0h1m9 0h1m10 0h1m9 0h1m9 0h1m9 0h1m10 0h1m9 0h1m9 0h1m9 0h1m10 0h1m9 0h1m9 0h1m9 0h1m10 0h1m9 0h1m9 0h1m9 0h1m10 0h1m9 0h1m9 0h1m9 0h1m10 0h1m9 0h1m9 0h1m9 0h1m10 0h1m9 0h1m9 0h1m9 0h1m10 0h1m9 0h1m9 0h1m9 0h1m10 0h1m9 0h1m9 0h1m9 0h1m10 0h1m9 0h1m9 0h1m9 0h1m10 0h1m9 0h1m9 0h1m9 0h1m10 0h1m9 0h1m9 0h1m9 0h1m10 0h1m9 0h1m9 0h1m9 0h1m10 0h1m9 0h1m9 0h1m9 0h1m10 0h1m9 0h1m9 0h1m9 0h1m10 0h1m9 0h1m9 0h1m9 0h1m10 0h1m9 0h1m9 0h1m9 0h1m10 0h1m9 0h1m9 0h1m9 0h1m10 0h1m9 0h1m9 0h1m9 0h1m10 0h1m9 0h1m9 0h1M95 517.5h1m9 0h1m9 0h1m10 0h1m9 0h1m9 0h1m9 0h1m10 0h1m9 0h1m9 0h1m9 0h1m10 0h1m9 0h1m9 0h1m9 0h1m10 0h1m9 0h1m9 0h1m9 0h1m10 0h1m9 0h1m9 0h1m9 0h1m10 0h1m9 0h1m9 0h1m9 0h1m10 0h1m9 0h1m9 0h1m9 0h1m10 0h1m9 0h1m9 0h1m9 0h1m10 0h1m9 0h1m9 0h1m9 0h1m10 0h1m9 0h1m9 0h1m9 0h1m10 0h1m9 0h1m9 0h1m9 0h1m10 0h1m9 0h1m9 0h1m9 0h1m10 0h1m9 0h1m9 0h1m9 0h1m10 0h1m9 0h1m9 0h1m9 0h1m10 0h1m9 0h1m9 0h1m9 0h1m10 0h1m9 0h1m9 0h1m9 0h1m10 0h1m9 0h1m9 0h1m9 0h1m10 0h1m9 0h1m9 0h1m9 0h1m10 0h1m9 0h1m9 0h1m9 0h1m10 0h1m9 0h1m9 0h1m9 0h1m10 0h1m9 0h1m9 0h1m9 0h1m10 0h1m9 0h1m9 0h1m9 0h1m10 0h1m9 0h1m9 0h1m9 0h1m10 0h1m9 0h1m9 0h1m9 0h1m10 0h1m9 0h1m9 0h1M95 506.5h1m9 0h1m9 0h1m10 0h1m9 0h1m9 0h1m9 0h1m10 0h1m9 0h1m9 0h1m9 0h1m10 0h1m9 0h1m9 0h1m9 0h1m10 0h1m9 0h1m9 0h1m9 0h1m10 0h1m9 0h1m9 0h1m9 0h1m10 0h1m9 0h1m9 0h1m9 0h1m10 0h1m9 0h1m9 0h1m9 0h1m10 0h1m9 0h1m9 0h1m9 0h1m10 0h1m9 0h1m9 0h1m9 0h1m10 0h1m9 0h1m9 0h1m9 0h1m10 0h1m9 0h1m9 0h1m9 0h1m10 0h1m9 0h1m9 0h1m9 0h1m10 0h1m9 0h1m9 0h1m9 0h1m10 0h1m9 0h1m9 0h1m9 0h1m10 0h1m9 0h1m9 0h1m9 0h1m10 0h1m9 0h1m9 0h1m9 0h1m10 0h1m9 0h1m9 0h1m9 0h1m10 0h1m9 0h1m9 0h1m9 0h1m10 0h1m9 0h1m9 0h1m9 0h1m10 0h1m9 0h1m9 0h1m9 0h1m10 0h1m9 0h1m9 0h1m9 0h1m10 0h1m9 0h1m9 0h1m9 0h1m10 0h1m9 0h1m9 0h1m9 0h1m10 0h1m9 0h1m9 0h1m9 0h1m10 0h1m9 0h1m9 0h1M95 496.5h1m9 0h1m9 0h1m10 0h1m9 0h1m9 0h1m9 0h1m10 0h1m9 0h1m9 0h1m9 0h1m10 0h1m9 0h1m9 0h1m9 0h1m10 0h1m9 0h1m9 0h1m9 0h1m10 0h1m9 0h1m9 0h1m9 0h1m10 0h1m9 0h1m9 0h1m9 0h1m10 0h1m9 0h1m9 0h1m9 0h1m10 0h1m9 0h1m9 0h1m9 0h1m10 0h1m9 0h1m9 0h1m9 0h1m10 0h1m9 0h1m9 0h1m9 0h1m10 0h1m9 0h1m9 0h1m9 0h1m10 0h1m9 0h1m9 0h1m9 0h1m10 0h1m9 0h1m9 0h1m9 0h1m10 0h1m9 0h1m9 0h1m9 0h1m10 0h1m9 0h1m9 0h1m9 0h1m10 0h1m9 0h1m9 0h1m9 0h1m10 0h1m9 0h1m9 0h1m9 0h1m10 0h1m9 0h1m9 0h1m9 0h1m10 0h1m9 0h1m9 0h1m9 0h1m10 0h1m9 0h1m9 0h1m9 0h1m10 0h1m9 0h1m9 0h1m9 0h1m10 0h1m9 0h1m9 0h1m9 0h1m10 0h1m9 0h1m9 0h1m9 0h1m10 0h1m9 0h1m9 0h1m9 0h1m10 0h1m9 0h1m9 0h1M95 486.5h1m9 0h1m9 0h1m10 0h1m9 0h1m9 0h1m9 0h1m10 0h1m9 0h1m9 0h1m9 0h1m10 0h1m9 0h1m9 0h1m9 0h1m10 0h1m9 0h1m9 0h1m9 0h1m10 0h1m9 0h1m9 0h1m9 0h1m10 0h1m9 0h1m9 0h1m9 0h1m10 0h1m9 0h1m9 0h1m9 0h1m10 0h1m9 0h1m9 0h1m9 0h1m10 0h1m9 0h1m9 0h1m9 0h1m10 0h1m9 0h1m9 0h1m9 0h1m10 0h1m9 0h1m9 0h1m9 0h1m10 0h1m9 0h1m9 0h1m9 0h1m10 0h1m9 0h1m9 0h1m9 0h1m10 0h1m9 0h1m9 0h1m9 0h1m10 0h1m9 0h1m9 0h1m9 0h1m10 0h1m9 0h1m9 0h1m9 0h1m10 0h1m9 0h1m9 0h1m9 0h1m10 0h1m9 0h1m9 0h1m9 0h1m10 0h1m9 0h1m9 0h1m9 0h1m10 0h1m9 0h1m9 0h1m9 0h1m10 0h1m9 0h1m9 0h1m9 0h1m10 0h1m9 0h1m9 0h1m9 0h1m10 0h1m9 0h1m9 0h1m9 0h1m10 0h1m9 0h1m9 0h1m9 0h1m10 0h1m9 0h1m9 0h1M95 476.5h1m9 0h1m9 0h1m10 0h1m9 0h1m9 0h1m9 0h1m10 0h1m9 0h1m9 0h1m9 0h1m10 0h1m9 0h1m9 0h1m9 0h1m10 0h1m9 0h1m9 0h1m9 0h1m10 0h1m9 0h1m9 0h1m9 0h1m10 0h1m9 0h1m9 0h1m9 0h1m10 0h1m9 0h1m9 0h1m9 0h1m10 0h1m9 0h1m9 0h1m9 0h1m10 0h1m9 0h1m9 0h1m9 0h1m10 0h1m9 0h1m9 0h1m9 0h1m10 0h1m9 0h1m9 0h1m9 0h1m10 0h1m9 0h1m9 0h1m9 0h1m10 0h1m9 0h1m9 0h1m9 0h1m10 0h1m9 0h1m9 0h1m9 0h1m10 0h1m9 0h1m9 0h1m9 0h1m10 0h1m9 0h1m9 0h1m9 0h1m10 0h1m9 0h1m9 0h1m9 0h1m10 0h1m9 0h1m9 0h1m9 0h1m10 0h1m9 0h1m9 0h1m9 0h1m10 0h1m9 0h1m9 0h1m9 0h1m10 0h1m9 0h1m9 0h1m9 0h1m10 0h1m9 0h1m9 0h1m9 0h1m10 0h1m9 0h1m9 0h1m9 0h1m10 0h1m9 0h1m9 0h1m9 0h1m10 0h1m9 0h1m9 0h1M95 465.5h1m9 0h1m9 0h1m10 0h1m9 0h1m9 0h1m9 0h1m10 0h1m9 0h1m9 0h1m9 0h1m10 0h1m9 0h1m9 0h1m9 0h1m10 0h1m9 0h1m9 0h1m9 0h1m10 0h1m9 0h1m9 0h1m9 0h1m10 0h1m9 0h1m9 0h1m9 0h1m10 0h1m9 0h1m9 0h1m9 0h1m10 0h1m9 0h1m9 0h1m9 0h1m10 0h1m9 0h1m9 0h1m9 0h1m10 0h1m9 0h1m9 0h1m9 0h1m10 0h1m9 0h1m9 0h1m9 0h1m10 0h1m9 0h1m9 0h1m9 0h1m10 0h1m9 0h1m9 0h1m9 0h1m10 0h1m9 0h1m9 0h1m9 0h1m10 0h1m9 0h1m9 0h1m9 0h1m10 0h1m9 0h1m9 0h1m9 0h1m10 0h1m9 0h1m9 0h1m9 0h1m10 0h1m9 0h1m9 0h1m9 0h1m10 0h1m9 0h1m9 0h1m9 0h1m10 0h1m9 0h1m9 0h1m9 0h1m10 0h1m9 0h1m9 0h1m9 0h1m10 0h1m9 0h1m9 0h1m9 0h1m10 0h1m9 0h1m9 0h1m9 0h1m10 0h1m9 0h1m9 0h1m9 0h1m10 0h1m9 0h1m9 0h1M95 455.5h1m9 0h1m9 0h1m10 0h1m9 0h1m9 0h1m9 0h1m10 0h1m9 0h1m9 0h1m9 0h1m10 0h1m9 0h1m9 0h1m9 0h1m10 0h1m9 0h1m9 0h1m9 0h1m10 0h1m9 0h1m9 0h1m9 0h1m10 0h1m9 0h1m9 0h1m9 0h1m10 0h1m9 0h1m9 0h1m9 0h1m10 0h1m9 0h1m9 0h1m9 0h1m10 0h1m9 0h1m9 0h1m9 0h1m10 0h1m9 0h1m9 0h1m9 0h1m10 0h1m9 0h1m9 0h1m9 0h1m10 0h1m9 0h1m9 0h1m9 0h1m10 0h1m9 0h1m9 0h1m9 0h1m10 0h1m9 0h1m9 0h1m9 0h1m10 0h1m9 0h1m9 0h1m9 0h1m10 0h1m9 0h1m9 0h1m9 0h1m10 0h1m9 0h1m9 0h1m9 0h1m10 0h1m9 0h1m9 0h1m9 0h1m10 0h1m9 0h1m9 0h1m9 0h1m10 0h1m9 0h1m9 0h1m9 0h1m10 0h1m9 0h1m9 0h1m9 0h1m10 0h1m9 0h1m9 0h1m9 0h1m10 0h1m9 0h1m9 0h1m9 0h1m10 0h1m9 0h1m9 0h1m9 0h1m10 0h1m9 0h1m9 0h1M95 445.5h1m9 0h1m9 0h1m10 0h1m9 0h1m9 0h1m9 0h1m10 0h1m9 0h1m9 0h1m9 0h1m10 0h1m9 0h1m9 0h1m9 0h1m10 0h1m9 0h1m9 0h1m9 0h1m10 0h1m9 0h1m9 0h1m9 0h1m10 0h1m9 0h1m9 0h1m9 0h1m10 0h1m9 0h1m9 0h1m9 0h1m10 0h1m9 0h1m9 0h1m9 0h1m10 0h1m9 0h1m9 0h1m9 0h1m10 0h1m9 0h1m9 0h1m9 0h1m10 0h1m9 0h1m9 0h1m9 0h1m10 0h1m9 0h1m9 0h1m9 0h1m10 0h1m9 0h1m9 0h1m9 0h1m10 0h1m9 0h1m9 0h1m9 0h1m10 0h1m9 0h1m9 0h1m9 0h1m10 0h1m9 0h1m9 0h1m9 0h1m10 0h1m9 0h1m9 0h1m9 0h1m10 0h1m9 0h1m9 0h1m9 0h1m10 0h1m9 0h1m9 0h1m9 0h1m10 0h1m9 0h1m9 0h1m9 0h1m10 0h1m9 0h1m9 0h1m9 0h1m10 0h1m9 0h1m9 0h1m9 0h1m10 0h1m9 0h1m9 0h1m9 0h1m10 0h1m9 0h1m9 0h1m9 0h1m10 0h1m9 0h1m9 0h1M95 435.5h1m9 0h1m9 0h1m10 0h1m9 0h1m9 0h1m9 0h1m10 0h1m9 0h1m9 0h1m9 0h1m10 0h1m9 0h1m9 0h1m9 0h1m10 0h1m9 0h1m9 0h1m9 0h1m10 0h1m9 0h1m9 0h1m9 0h1m10 0h1m9 0h1m9 0h1m9 0h1m10 0h1m9 0h1m9 0h1m9 0h1m10 0h1m9 0h1m9 0h1m9 0h1m10 0h1m9 0h1m9 0h1m9 0h1m10 0h1m9 0h1m9 0h1m9 0h1m10 0h1m9 0h1m9 0h1m9 0h1m10 0h1m9 0h1m9 0h1m9 0h1m10 0h1m9 0h1m9 0h1m9 0h1m10 0h1m9 0h1m9 0h1m9 0h1m10 0h1m9 0h1m9 0h1m9 0h1m10 0h1m9 0h1m9 0h1m9 0h1m10 0h1m9 0h1m9 0h1m9 0h1m10 0h1m9 0h1m9 0h1m9 0h1m10 0h1m9 0h1m9 0h1m9 0h1m10 0h1m9 0h1m9 0h1m9 0h1m10 0h1m9 0h1m9 0h1m9 0h1m10 0h1m9 0h1m9 0h1m9 0h1m10 0h1m9 0h1m9 0h1m9 0h1m10 0h1m9 0h1m9 0h1m9 0h1m10 0h1m9 0h1m9 0h1M95 424.5h1m9 0h1m9 0h1m10 0h1m9 0h1m9 0h1m9 0h1m10 0h1m9 0h1m9 0h1m9 0h1m10 0h1m9 0h1m9 0h1m9 0h1m10 0h1m9 0h1m9 0h1m9 0h1m10 0h1m9 0h1m9 0h1m9 0h1m10 0h1m9 0h1m9 0h1m9 0h1m10 0h1m9 0h1m9 0h1m9 0h1m10 0h1m9 0h1m9 0h1m9 0h1m10 0h1m9 0h1m9 0h1m9 0h1m10 0h1m9 0h1m9 0h1m9 0h1m10 0h1m9 0h1m9 0h1m9 0h1m10 0h1m9 0h1m9 0h1m9 0h1m10 0h1m9 0h1m9 0h1m9 0h1m10 0h1m9 0h1m9 0h1m9 0h1m10 0h1m9 0h1m9 0h1m9 0h1m10 0h1m9 0h1m9 0h1m9 0h1m10 0h1m9 0h1m9 0h1m9 0h1m10 0h1m9 0h1m9 0h1m9 0h1m10 0h1m9 0h1m9 0h1m9 0h1m10 0h1m9 0h1m9 0h1m9 0h1m10 0h1m9 0h1m9 0h1m9 0h1m10 0h1m9 0h1m9 0h1m9 0h1m10 0h1m9 0h1m9 0h1m9 0h1m10 0h1m9 0h1m9 0h1m9 0h1m10 0h1m9 0h1m9 0h1M95 414.5h1m9 0h1m9 0h1m10 0h1m9 0h1m9 0h1m9 0h1m10 0h1m9 0h1m9 0h1m9 0h1m10 0h1m9 0h1m9 0h1m9 0h1m10 0h1m9 0h1m9 0h1m9 0h1m10 0h1m9 0h1m9 0h1m9 0h1m10 0h1m9 0h1m9 0h1m9 0h1m10 0h1m9 0h1m9 0h1m9 0h1m10 0h1m9 0h1m9 0h1m9 0h1m10 0h1m9 0h1m9 0h1m9 0h1m10 0h1m9 0h1m9 0h1m9 0h1m10 0h1m9 0h1m9 0h1m9 0h1m10 0h1m9 0h1m9 0h1m9 0h1m10 0h1m9 0h1m9 0h1m9 0h1m10 0h1m9 0h1m9 0h1m9 0h1m10 0h1m9 0h1m9 0h1m9 0h1m10 0h1m9 0h1m9 0h1m9 0h1m10 0h1m9 0h1m9 0h1m9 0h1m10 0h1m9 0h1m9 0h1m9 0h1m10 0h1m9 0h1m9 0h1m9 0h1m10 0h1m9 0h1m9 0h1m9 0h1m10 0h1m9 0h1m9 0h1m9 0h1m10 0h1m9 0h1m9 0h1m9 0h1m10 0h1m9 0h1m9 0h1m9 0h1m10 0h1m9 0h1m9 0h1m9 0h1m10 0h1m9 0h1m9 0h1M95 404.5h1m9 0h1m9 0h1m10 0h1m9 0h1m9 0h1m9 0h1m10 0h1m9 0h1m9 0h1m9 0h1m10 0h1m9 0h1m9 0h1m9 0h1m10 0h1m9 0h1m9 0h1m9 0h1m10 0h1m9 0h1m9 0h1m9 0h1m10 0h1m9 0h1m9 0h1m9 0h1m10 0h1m9 0h1m9 0h1m9 0h1m10 0h1m9 0h1m9 0h1m9 0h1m10 0h1m9 0h1m9 0h1m9 0h1m10 0h1m9 0h1m9 0h1m9 0h1m10 0h1m9 0h1m9 0h1m9 0h1m10 0h1m9 0h1m9 0h1m9 0h1m10 0h1m9 0h1m9 0h1m9 0h1m10 0h1m9 0h1m9 0h1m9 0h1m10 0h1m9 0h1m9 0h1m9 0h1m10 0h1m9 0h1m9 0h1m9 0h1m10 0h1m9 0h1m9 0h1m9 0h1m10 0h1m9 0h1m9 0h1m9 0h1m10 0h1m9 0h1m9 0h1m9 0h1m10 0h1m9 0h1m9 0h1m9 0h1m10 0h1m9 0h1m9 0h1m9 0h1m10 0h1m9 0h1m9 0h1m9 0h1m10 0h1m9 0h1m9 0h1m9 0h1m10 0h1m9 0h1m9 0h1m9 0h1m10 0h1m9 0h1m9 0h1M95 394.5h1m9 0h1m9 0h1m10 0h1m9 0h1m9 0h1m9 0h1m10 0h1m9 0h1m9 0h1m9 0h1m10 0h1m9 0h1m9 0h1m9 0h1m10 0h1m9 0h1m9 0h1m9 0h1m10 0h1m9 0h1m9 0h1m9 0h1m10 0h1m9 0h1m9 0h1m9 0h1m10 0h1m9 0h1m9 0h1m9 0h1m10 0h1m9 0h1m9 0h1m9 0h1m10 0h1m9 0h1m9 0h1m9 0h1m10 0h1m9 0h1m9 0h1m9 0h1m10 0h1m9 0h1m9 0h1m9 0h1m10 0h1m9 0h1m9 0h1m9 0h1m10 0h1m9 0h1m9 0h1m9 0h1m10 0h1m9 0h1m9 0h1m9 0h1m10 0h1m9 0h1m9 0h1m9 0h1m10 0h1m9 0h1m9 0h1m9 0h1m10 0h1m9 0h1m9 0h1m9 0h1m10 0h1m9 0h1m9 0h1m9 0h1m10 0h1m9 0h1m9 0h1m9 0h1m10 0h1m9 0h1m9 0h1m9 0h1m10 0h1m9 0h1m9 0h1m9 0h1m10 0h1m9 0h1m9 0h1m9 0h1m10 0h1m9 0h1m9 0h1m9 0h1m10 0h1m9 0h1m9 0h1m9 0h1m10 0h1m9 0h1m9 0h1M95 383.5h1m9 0h1m9 0h1m10 0h1m9 0h1m9 0h1m9 0h1m10 0h1m9 0h1m9 0h1m9 0h1m10 0h1m9 0h1m9 0h1m9 0h1m10 0h1m9 0h1m9 0h1m9 0h1m10 0h1m9 0h1m9 0h1m9 0h1m10 0h1m9 0h1m9 0h1m9 0h1m10 0h1m9 0h1m9 0h1m9 0h1m10 0h1m9 0h1m9 0h1m9 0h1m10 0h1m9 0h1m9 0h1m9 0h1m10 0h1m9 0h1m9 0h1m9 0h1m10 0h1m9 0h1m9 0h1m9 0h1m10 0h1m9 0h1m9 0h1m9 0h1m10 0h1m9 0h1m9 0h1m9 0h1m10 0h1m9 0h1m9 0h1m9 0h1m10 0h1m9 0h1m9 0h1m9 0h1m10 0h1m9 0h1m9 0h1m9 0h1m10 0h1m9 0h1m9 0h1m9 0h1m10 0h1m9 0h1m9 0h1m9 0h1m10 0h1m9 0h1m9 0h1m9 0h1m10 0h1m9 0h1m9 0h1m9 0h1m10 0h1m9 0h1m9 0h1m9 0h1m10 0h1m9 0h1m9 0h1m9 0h1m10 0h1m9 0h1m9 0h1m9 0h1m10 0h1m9 0h1m9 0h1m9 0h1m10 0h1m9 0h1m9 0h1M95 373.5h1m9 0h1m9 0h1m10 0h1m9 0h1m9 0h1m9 0h1m10 0h1m9 0h1m9 0h1m9 0h1m10 0h1m9 0h1m9 0h1m9 0h1m10 0h1m9 0h1m9 0h1m9 0h1m10 0h1m9 0h1m9 0h1m9 0h1m10 0h1m9 0h1m9 0h1m9 0h1m10 0h1m9 0h1m9 0h1m9 0h1m10 0h1m9 0h1m9 0h1m9 0h1m10 0h1m9 0h1m9 0h1m9 0h1m10 0h1m9 0h1m9 0h1m9 0h1m10 0h1m9 0h1m9 0h1m9 0h1m10 0h1m9 0h1m9 0h1m9 0h1m10 0h1m9 0h1m9 0h1m9 0h1m10 0h1m9 0h1m9 0h1m9 0h1m10 0h1m9 0h1m9 0h1m9 0h1m10 0h1m9 0h1m9 0h1m9 0h1m10 0h1m9 0h1m9 0h1m9 0h1m10 0h1m9 0h1m9 0h1m9 0h1m10 0h1m9 0h1m9 0h1m9 0h1m10 0h1m9 0h1m9 0h1m9 0h1m10 0h1m9 0h1m9 0h1m9 0h1m10 0h1m9 0h1m9 0h1m9 0h1m10 0h1m9 0h1m9 0h1m9 0h1m10 0h1m9 0h1m9 0h1m9 0h1m10 0h1m9 0h1m9 0h1M95 363.5h1m9 0h1m9 0h1m10 0h1m9 0h1m9 0h1m9 0h1m10 0h1m9 0h1m9 0h1m9 0h1m10 0h1m9 0h1m9 0h1m9 0h1m10 0h1m9 0h1m9 0h1m9 0h1m10 0h1m9 0h1m9 0h1m9 0h1m10 0h1m9 0h1m9 0h1m9 0h1m10 0h1m9 0h1m9 0h1m9 0h1m10 0h1m9 0h1m9 0h1m9 0h1m10 0h1m9 0h1m9 0h1m9 0h1m10 0h1m9 0h1m9 0h1m9 0h1m10 0h1m9 0h1m9 0h1m9 0h1m10 0h1m9 0h1m9 0h1m9 0h1m10 0h1m9 0h1m9 0h1m9 0h1m10 0h1m9 0h1m9 0h1m9 0h1m10 0h1m9 0h1m9 0h1m9 0h1m10 0h1m9 0h1m9 0h1m9 0h1m10 0h1m9 0h1m9 0h1m9 0h1m10 0h1m9 0h1m9 0h1m9 0h1m10 0h1m9 0h1m9 0h1m9 0h1m10 0h1m9 0h1m9 0h1m9 0h1m10 0h1m9 0h1m9 0h1m9 0h1m10 0h1m9 0h1m9 0h1m9 0h1m10 0h1m9 0h1m9 0h1m9 0h1m10 0h1m9 0h1m9 0h1m9 0h1m10 0h1m9 0h1m9 0h1M95 353.5h1m9 0h1m9 0h1m10 0h1m9 0h1m9 0h1m9 0h1m10 0h1m9 0h1m9 0h1m9 0h1m10 0h1m9 0h1m9 0h1m9 0h1m10 0h1m9 0h1m9 0h1m9 0h1m10 0h1m9 0h1m9 0h1m9 0h1m10 0h1m9 0h1m9 0h1m9 0h1m10 0h1m9 0h1m9 0h1m9 0h1m10 0h1m9 0h1m9 0h1m9 0h1m10 0h1m9 0h1m9 0h1m9 0h1m10 0h1m9 0h1m9 0h1m9 0h1m10 0h1m9 0h1m9 0h1m9 0h1m10 0h1m9 0h1m9 0h1m9 0h1m10 0h1m9 0h1m9 0h1m9 0h1m10 0h1m9 0h1m9 0h1m9 0h1m10 0h1m9 0h1m9 0h1m9 0h1m10 0h1m9 0h1m9 0h1m9 0h1m10 0h1m9 0h1m9 0h1m9 0h1m10 0h1m9 0h1m9 0h1m9 0h1m10 0h1m9 0h1m9 0h1m9 0h1m10 0h1m9 0h1m9 0h1m9 0h1m10 0h1m9 0h1m9 0h1m9 0h1m10 0h1m9 0h1m9 0h1m9 0h1m10 0h1m9 0h1m9 0h1m9 0h1m10 0h1m9 0h1m9 0h1m9 0h1m10 0h1m9 0h1m9 0h1M95 342.5h1m9 0h1m9 0h1m10 0h1m9 0h1m9 0h1m9 0h1m10 0h1m9 0h1m9 0h1m9 0h1m10 0h1m9 0h1m9 0h1m9 0h1m10 0h1m9 0h1m9 0h1m9 0h1m10 0h1m9 0h1m9 0h1m9 0h1m10 0h1m9 0h1m9 0h1m9 0h1m10 0h1m9 0h1m9 0h1m9 0h1m10 0h1m9 0h1m9 0h1m9 0h1m10 0h1m9 0h1m9 0h1m9 0h1m10 0h1m9 0h1m9 0h1m9 0h1m10 0h1m9 0h1m9 0h1m9 0h1m10 0h1m9 0h1m9 0h1m9 0h1m10 0h1m9 0h1m9 0h1m9 0h1m10 0h1m9 0h1m9 0h1m9 0h1m10 0h1m9 0h1m9 0h1m9 0h1m10 0h1m9 0h1m9 0h1m9 0h1m10 0h1m9 0h1m9 0h1m9 0h1m10 0h1m9 0h1m9 0h1m9 0h1m10 0h1m9 0h1m9 0h1m9 0h1m10 0h1m9 0h1m9 0h1m9 0h1m10 0h1m9 0h1m9 0h1m9 0h1m10 0h1m9 0h1m9 0h1m9 0h1m10 0h1m9 0h1m9 0h1m9 0h1m10 0h1m9 0h1m9 0h1m9 0h1m10 0h1m9 0h1m9 0h1M95 332.5h1m9 0h1m9 0h1m10 0h1m9 0h1m9 0h1m9 0h1m10 0h1m9 0h1m9 0h1m9 0h1m10 0h1m9 0h1m9 0h1m9 0h1m10 0h1m9 0h1m9 0h1m9 0h1m10 0h1m9 0h1m9 0h1m9 0h1m10 0h1m9 0h1m9 0h1m9 0h1m10 0h1m9 0h1m9 0h1m9 0h1m10 0h1m9 0h1m9 0h1m9 0h1m10 0h1m9 0h1m9 0h1m9 0h1m10 0h1m9 0h1m9 0h1m9 0h1m10 0h1m9 0h1m9 0h1m9 0h1m10 0h1m9 0h1m9 0h1m9 0h1m10 0h1m9 0h1m9 0h1m9 0h1m10 0h1m9 0h1m9 0h1m9 0h1m10 0h1m9 0h1m9 0h1m9 0h1m10 0h1m9 0h1m9 0h1m9 0h1m10 0h1m9 0h1m9 0h1m9 0h1m10 0h1m9 0h1m9 0h1m9 0h1m10 0h1m9 0h1m9 0h1m9 0h1m10 0h1m9 0h1m9 0h1m9 0h1m10 0h1m9 0h1m9 0h1m9 0h1m10 0h1m9 0h1m9 0h1m9 0h1m10 0h1m9 0h1m9 0h1m9 0h1m10 0h1m9 0h1m9 0h1m9 0h1m10 0h1m9 0h1m9 0h1M95 322.5h1m9 0h1m9 0h1m10 0h1m9 0h1m9 0h1m9 0h1m10 0h1m9 0h1m9 0h1m9 0h1m10 0h1m9 0h1m9 0h1m9 0h1m10 0h1m9 0h1m9 0h1m9 0h1m10 0h1m9 0h1m9 0h1m9 0h1m10 0h1m9 0h1m9 0h1m9 0h1m10 0h1m9 0h1m9 0h1m9 0h1m10 0h1m9 0h1m9 0h1m9 0h1m10 0h1m9 0h1m9 0h1m9 0h1m10 0h1m9 0h1m9 0h1m9 0h1m10 0h1m9 0h1m9 0h1m9 0h1m10 0h1m9 0h1m9 0h1m9 0h1m10 0h1m9 0h1m9 0h1m9 0h1m10 0h1m9 0h1m9 0h1m9 0h1m10 0h1m9 0h1m9 0h1m9 0h1m10 0h1m9 0h1m9 0h1m9 0h1m10 0h1m9 0h1m9 0h1m9 0h1m10 0h1m9 0h1m9 0h1m9 0h1m10 0h1m9 0h1m9 0h1m9 0h1m10 0h1m9 0h1m9 0h1m9 0h1m10 0h1m9 0h1m9 0h1m9 0h1m10 0h1m9 0h1m9 0h1m9 0h1m10 0h1m9 0h1m9 0h1m9 0h1m10 0h1m9 0h1m9 0h1m9 0h1m10 0h1m9 0h1m9 0h1M95 312.5h1m9 0h1m9 0h1m10 0h1m9 0h1m9 0h1m9 0h1m10 0h1m9 0h1m9 0h1m9 0h1m10 0h1m9 0h1m9 0h1m9 0h1m10 0h1m9 0h1m9 0h1m9 0h1m10 0h1m9 0h1m9 0h1m9 0h1m10 0h1m9 0h1m9 0h1m9 0h1m10 0h1m9 0h1m9 0h1m9 0h1m10 0h1m9 0h1m9 0h1m9 0h1m10 0h1m9 0h1m9 0h1m9 0h1m10 0h1m9 0h1m9 0h1m9 0h1m10 0h1m9 0h1m9 0h1m9 0h1m10 0h1m9 0h1m9 0h1m9 0h1m10 0h1m9 0h1m9 0h1m9 0h1m10 0h1m9 0h1m9 0h1m9 0h1m10 0h1m9 0h1m9 0h1m9 0h1m10 0h1m9 0h1m9 0h1m9 0h1m10 0h1m9 0h1m9 0h1m9 0h1m10 0h1m9 0h1m9 0h1m9 0h1m10 0h1m9 0h1m9 0h1m9 0h1m10 0h1m9 0h1m9 0h1m9 0h1m10 0h1m9 0h1m9 0h1m9 0h1m10 0h1m9 0h1m9 0h1m9 0h1m10 0h1m9 0h1m9 0h1m9 0h1m10 0h1m9 0h1m9 0h1m9 0h1m10 0h1m9 0h1m9 0h1M95 301.5h1m9 0h1m9 0h1m10 0h1m9 0h1m9 0h1m9 0h1m10 0h1m9 0h1m9 0h1m9 0h1m10 0h1m9 0h1m9 0h1m9 0h1m10 0h1m9 0h1m9 0h1m9 0h1m10 0h1m9 0h1m9 0h1m9 0h1m10 0h1m9 0h1m9 0h1m9 0h1m10 0h1m9 0h1m9 0h1m9 0h1m10 0h1m9 0h1m9 0h1m9 0h1m10 0h1m9 0h1m9 0h1m9 0h1m10 0h1m9 0h1m9 0h1m9 0h1m10 0h1m9 0h1m9 0h1m9 0h1m10 0h1m9 0h1m9 0h1m9 0h1m10 0h1m9 0h1m9 0h1m9 0h1m10 0h1m9 0h1m9 0h1m9 0h1m10 0h1m9 0h1m9 0h1m9 0h1m10 0h1m9 0h1m9 0h1m9 0h1m10 0h1m9 0h1m9 0h1m9 0h1m10 0h1m9 0h1m9 0h1m9 0h1m10 0h1m9 0h1m9 0h1m9 0h1m10 0h1m9 0h1m9 0h1m9 0h1m10 0h1m9 0h1m9 0h1m9 0h1m10 0h1m9 0h1m9 0h1m9 0h1m10 0h1m9 0h1m9 0h1m9 0h1m10 0h1m9 0h1m9 0h1m9 0h1m10 0h1m9 0h1m9 0h1M95 291.5h1m9 0h1m9 0h1m10 0h1m9 0h1m9 0h1m9 0h1m10 0h1m9 0h1m9 0h1m9 0h1m10 0h1m9 0h1m9 0h1m9 0h1m10 0h1m9 0h1m9 0h1m9 0h1m10 0h1m9 0h1m9 0h1m9 0h1m10 0h1m9 0h1m9 0h1m9 0h1m10 0h1m9 0h1m9 0h1m9 0h1m10 0h1m9 0h1m9 0h1m9 0h1m10 0h1m9 0h1m9 0h1m9 0h1m10 0h1m9 0h1m9 0h1m9 0h1m10 0h1m9 0h1m9 0h1m9 0h1m10 0h1m9 0h1m9 0h1m9 0h1m10 0h1m9 0h1m9 0h1m9 0h1m10 0h1m9 0h1m9 0h1m9 0h1m10 0h1m9 0h1m9 0h1m9 0h1m10 0h1m9 0h1m9 0h1m9 0h1m10 0h1m9 0h1m9 0h1m9 0h1m10 0h1m9 0h1m9 0h1m9 0h1m10 0h1m9 0h1m9 0h1m9 0h1m10 0h1m9 0h1m9 0h1m9 0h1m10 0h1m9 0h1m9 0h1m9 0h1m10 0h1m9 0h1m9 0h1m9 0h1m10 0h1m9 0h1m9 0h1m9 0h1m10 0h1m9 0h1m9 0h1m9 0h1m10 0h1m9 0h1m9 0h1M95 281.5h1m9 0h1m9 0h1m10 0h1m9 0h1m9 0h1m9 0h1m10 0h1m9 0h1m9 0h1m9 0h1m10 0h1m9 0h1m9 0h1m9 0h1m10 0h1m9 0h1m9 0h1m9 0h1m10 0h1m9 0h1m9 0h1m9 0h1m10 0h1m9 0h1m9 0h1m9 0h1m10 0h1m9 0h1m9 0h1m9 0h1m10 0h1m9 0h1m9 0h1m9 0h1m10 0h1m9 0h1m9 0h1m9 0h1m10 0h1m9 0h1m9 0h1m9 0h1m10 0h1m9 0h1m9 0h1m9 0h1m10 0h1m9 0h1m9 0h1m9 0h1m10 0h1m9 0h1m9 0h1m9 0h1m10 0h1m9 0h1m9 0h1m9 0h1m10 0h1m9 0h1m9 0h1m9 0h1m10 0h1m9 0h1m9 0h1m9 0h1m10 0h1m9 0h1m9 0h1m9 0h1m10 0h1m9 0h1m9 0h1m9 0h1m10 0h1m9 0h1m9 0h1m9 0h1m10 0h1m9 0h1m9 0h1m9 0h1m10 0h1m9 0h1m9 0h1m9 0h1m10 0h1m9 0h1m9 0h1m9 0h1m10 0h1m9 0h1m9 0h1m9 0h1m10 0h1m9 0h1m9 0h1m9 0h1m10 0h1m9 0h1m9 0h1M95 271.5h1m9 0h1m9 0h1m10 0h1m9 0h1m9 0h1m9 0h1m10 0h1m9 0h1m9 0h1m9 0h1m10 0h1m9 0h1m9 0h1m9 0h1m10 0h1m9 0h1m9 0h1m9 0h1m10 0h1m9 0h1m9 0h1m9 0h1m10 0h1m9 0h1m9 0h1m9 0h1m10 0h1m9 0h1m9 0h1m9 0h1m10 0h1m9 0h1m9 0h1m9 0h1m10 0h1m9 0h1m9 0h1m9 0h1m10 0h1m9 0h1m9 0h1m9 0h1m10 0h1m9 0h1m9 0h1m9 0h1m10 0h1m9 0h1m9 0h1m9 0h1m10 0h1m9 0h1m9 0h1m9 0h1m10 0h1m9 0h1m9 0h1m9 0h1m10 0h1m9 0h1m9 0h1m9 0h1m10 0h1m9 0h1m9 0h1m9 0h1m10 0h1m9 0h1m9 0h1m9 0h1m10 0h1m9 0h1m9 0h1m9 0h1m10 0h1m9 0h1m9 0h1m9 0h1m10 0h1m9 0h1m9 0h1m9 0h1m10 0h1m9 0h1m9 0h1m9 0h1m10 0h1m9 0h1m9 0h1m9 0h1m10 0h1m9 0h1m9 0h1m9 0h1m10 0h1m9 0h1m9 0h1m9 0h1m10 0h1m9 0h1m9 0h1M95 260.5h1m9 0h1m9 0h1m10 0h1m9 0h1m9 0h1m9 0h1m10 0h1m9 0h1m9 0h1m9 0h1m10 0h1m9 0h1m9 0h1m9 0h1m10 0h1m9 0h1m9 0h1m9 0h1m10 0h1m9 0h1m9 0h1m9 0h1m10 0h1m9 0h1m9 0h1m9 0h1m10 0h1m9 0h1m9 0h1m9 0h1m10 0h1m9 0h1m9 0h1m9 0h1m10 0h1m9 0h1m9 0h1m9 0h1m10 0h1m9 0h1m9 0h1m9 0h1m10 0h1m9 0h1m9 0h1m9 0h1m10 0h1m9 0h1m9 0h1m9 0h1m10 0h1m9 0h1m9 0h1m9 0h1m10 0h1m9 0h1m9 0h1m9 0h1m10 0h1m9 0h1m9 0h1m9 0h1m10 0h1m9 0h1m9 0h1m9 0h1m10 0h1m9 0h1m9 0h1m9 0h1m10 0h1m9 0h1m9 0h1m9 0h1m10 0h1m9 0h1m9 0h1m9 0h1m10 0h1m9 0h1m9 0h1m9 0h1m10 0h1m9 0h1m9 0h1m9 0h1m10 0h1m9 0h1m9 0h1m9 0h1m10 0h1m9 0h1m9 0h1m9 0h1m10 0h1m9 0h1m9 0h1m9 0h1m10 0h1m9 0h1m9 0h1M95 250.5h1m9 0h1m9 0h1m10 0h1m9 0h1m9 0h1m9 0h1m10 0h1m9 0h1m9 0h1m9 0h1m10 0h1m9 0h1m9 0h1m9 0h1m10 0h1m9 0h1m9 0h1m9 0h1m10 0h1m9 0h1m9 0h1m9 0h1m10 0h1m9 0h1m9 0h1m9 0h1m10 0h1m9 0h1m9 0h1m9 0h1m10 0h1m9 0h1m9 0h1m9 0h1m10 0h1m9 0h1m9 0h1m9 0h1m10 0h1m9 0h1m9 0h1m9 0h1m10 0h1m9 0h1m9 0h1m9 0h1m10 0h1m9 0h1m9 0h1m9 0h1m10 0h1m9 0h1m9 0h1m9 0h1m10 0h1m9 0h1m9 0h1m9 0h1m10 0h1m9 0h1m9 0h1m9 0h1m10 0h1m9 0h1m9 0h1m9 0h1m10 0h1m9 0h1m9 0h1m9 0h1m10 0h1m9 0h1m9 0h1m9 0h1m10 0h1m9 0h1m9 0h1m9 0h1m10 0h1m9 0h1m9 0h1m9 0h1m10 0h1m9 0h1m9 0h1m9 0h1m10 0h1m9 0h1m9 0h1m9 0h1m10 0h1m9 0h1m9 0h1m9 0h1m10 0h1m9 0h1m9 0h1m9 0h1m10 0h1m9 0h1m9 0h1M95 240.5h1m9 0h1m9 0h1m10 0h1m9 0h1m9 0h1m9 0h1m10 0h1m9 0h1m9 0h1m9 0h1m10 0h1m9 0h1m9 0h1m9 0h1m10 0h1m9 0h1m9 0h1m9 0h1m10 0h1m9 0h1m9 0h1m9 0h1m10 0h1m9 0h1m9 0h1m9 0h1m10 0h1m9 0h1m9 0h1m9 0h1m10 0h1m9 0h1m9 0h1m9 0h1m10 0h1m9 0h1m9 0h1m9 0h1m10 0h1m9 0h1m9 0h1m9 0h1m10 0h1m9 0h1m9 0h1m9 0h1m10 0h1m9 0h1m9 0h1m9 0h1m10 0h1m9 0h1m9 0h1m9 0h1m10 0h1m9 0h1m9 0h1m9 0h1m10 0h1m9 0h1m9 0h1m9 0h1m10 0h1m9 0h1m9 0h1m9 0h1m10 0h1m9 0h1m9 0h1m9 0h1m10 0h1m9 0h1m9 0h1m9 0h1m10 0h1m9 0h1m9 0h1m9 0h1m10 0h1m9 0h1m9 0h1m9 0h1m10 0h1m9 0h1m9 0h1m9 0h1m10 0h1m9 0h1m9 0h1m9 0h1m10 0h1m9 0h1m9 0h1m9 0h1m10 0h1m9 0h1m9 0h1m9 0h1m10 0h1m9 0h1m9 0h1M95 230.5h1m9 0h1m9 0h1m10 0h1m9 0h1m9 0h1m9 0h1m10 0h1m9 0h1m9 0h1m9 0h1m10 0h1m9 0h1m9 0h1m9 0h1m10 0h1m9 0h1m9 0h1m9 0h1m10 0h1m9 0h1m9 0h1m9 0h1m10 0h1m9 0h1m9 0h1m9 0h1m10 0h1m9 0h1m9 0h1m9 0h1m10 0h1m9 0h1m9 0h1m9 0h1m10 0h1m9 0h1m9 0h1m9 0h1m10 0h1m9 0h1m9 0h1m9 0h1m10 0h1m9 0h1m9 0h1m9 0h1m10 0h1m9 0h1m9 0h1m9 0h1m10 0h1m9 0h1m9 0h1m9 0h1m10 0h1m9 0h1m9 0h1m9 0h1m10 0h1m9 0h1m9 0h1m9 0h1m10 0h1m9 0h1m9 0h1m9 0h1m10 0h1m9 0h1m9 0h1m9 0h1m10 0h1m9 0h1m9 0h1m9 0h1m10 0h1m9 0h1m9 0h1m9 0h1m10 0h1m9 0h1m9 0h1m9 0h1m10 0h1m9 0h1m9 0h1m9 0h1m10 0h1m9 0h1m9 0h1m9 0h1m10 0h1m9 0h1m9 0h1m9 0h1m10 0h1m9 0h1m9 0h1m9 0h1m10 0h1m9 0h1m9 0h1M95 219.5h1m9 0h1m9 0h1m10 0h1m9 0h1m9 0h1m9 0h1m10 0h1m9 0h1m9 0h1m9 0h1m10 0h1m9 0h1m9 0h1m9 0h1m10 0h1m9 0h1m9 0h1m9 0h1m10 0h1m9 0h1m9 0h1m9 0h1m10 0h1m9 0h1m9 0h1m9 0h1m10 0h1m9 0h1m9 0h1m9 0h1m10 0h1m9 0h1m9 0h1m9 0h1m10 0h1m9 0h1m9 0h1m9 0h1m10 0h1m9 0h1m9 0h1m9 0h1m10 0h1m9 0h1m9 0h1m9 0h1m10 0h1m9 0h1m9 0h1m9 0h1m10 0h1m9 0h1m9 0h1m9 0h1m10 0h1m9 0h1m9 0h1m9 0h1m10 0h1m9 0h1m9 0h1m9 0h1m10 0h1m9 0h1m9 0h1m9 0h1m10 0h1m9 0h1m9 0h1m9 0h1m10 0h1m9 0h1m9 0h1m9 0h1m10 0h1m9 0h1m9 0h1m9 0h1m10 0h1m9 0h1m9 0h1m9 0h1m10 0h1m9 0h1m9 0h1m9 0h1m10 0h1m9 0h1m9 0h1m9 0h1m10 0h1m9 0h1m9 0h1m9 0h1m10 0h1m9 0h1m9 0h1m9 0h1m10 0h1m9 0h1m9 0h1M95 209.5h1m9 0h1m9 0h1m10 0h1m9 0h1m9 0h1m9 0h1m10 0h1m9 0h1m9 0h1m9 0h1m10 0h1m9 0h1m9 0h1m9 0h1m10 0h1m9 0h1m9 0h1m9 0h1m10 0h1m9 0h1m9 0h1m9 0h1m10 0h1m9 0h1m9 0h1m9 0h1m10 0h1m9 0h1m9 0h1m9 0h1m10 0h1m9 0h1m9 0h1m9 0h1m10 0h1m9 0h1m9 0h1m9 0h1m10 0h1m9 0h1m9 0h1m9 0h1m10 0h1m9 0h1m9 0h1m9 0h1m10 0h1m9 0h1m9 0h1m9 0h1m10 0h1m9 0h1m9 0h1m9 0h1m10 0h1m9 0h1m9 0h1m9 0h1m10 0h1m9 0h1m9 0h1m9 0h1m10 0h1m9 0h1m9 0h1m9 0h1m10 0h1m9 0h1m9 0h1m9 0h1m10 0h1m9 0h1m9 0h1m9 0h1m10 0h1m9 0h1m9 0h1m9 0h1m10 0h1m9 0h1m9 0h1m9 0h1m10 0h1m9 0h1m9 0h1m9 0h1m10 0h1m9 0h1m9 0h1m9 0h1m10 0h1m9 0h1m9 0h1m9 0h1m10 0h1m9 0h1m9 0h1m9 0h1m10 0h1m9 0h1m9 0h1M95 199.5h1m9 0h1m9 0h1m10 0h1m9 0h1m9 0h1m9 0h1m10 0h1m9 0h1m9 0h1m9 0h1m10 0h1m9 0h1m9 0h1m9 0h1m10 0h1m9 0h1m9 0h1m9 0h1m10 0h1m9 0h1m9 0h1m9 0h1m10 0h1m9 0h1m9 0h1m9 0h1m10 0h1m9 0h1m9 0h1m9 0h1m10 0h1m9 0h1m9 0h1m9 0h1m10 0h1m9 0h1m9 0h1m9 0h1m10 0h1m9 0h1m9 0h1m9 0h1m10 0h1m9 0h1m9 0h1m9 0h1m10 0h1m9 0h1m9 0h1m9 0h1m10 0h1m9 0h1m9 0h1m9 0h1m10 0h1m9 0h1m9 0h1m9 0h1m10 0h1m9 0h1m9 0h1m9 0h1m10 0h1m9 0h1m9 0h1m9 0h1m10 0h1m9 0h1m9 0h1m9 0h1m10 0h1m9 0h1m9 0h1m9 0h1m10 0h1m9 0h1m9 0h1m9 0h1m10 0h1m9 0h1m9 0h1m9 0h1m10 0h1m9 0h1m9 0h1m9 0h1m10 0h1m9 0h1m9 0h1m9 0h1m10 0h1m9 0h1m9 0h1m9 0h1m10 0h1m9 0h1m9 0h1m9 0h1m10 0h1m9 0h1m9 0h1M95 189.5h1m9 0h1m9 0h1m10 0h1m9 0h1m9 0h1m9 0h1m10 0h1m9 0h1m9 0h1m9 0h1m10 0h1m9 0h1m9 0h1m9 0h1m10 0h1m9 0h1m9 0h1m9 0h1m10 0h1m9 0h1m9 0h1m9 0h1m10 0h1m9 0h1m9 0h1m9 0h1m10 0h1m9 0h1m9 0h1m9 0h1m10 0h1m9 0h1m9 0h1m9 0h1m10 0h1m9 0h1m9 0h1m9 0h1m10 0h1m9 0h1m9 0h1m9 0h1m10 0h1m9 0h1m9 0h1m9 0h1m10 0h1m9 0h1m9 0h1m9 0h1m10 0h1m9 0h1m9 0h1m9 0h1m10 0h1m9 0h1m9 0h1m9 0h1m10 0h1m9 0h1m9 0h1m9 0h1m10 0h1m9 0h1m9 0h1m9 0h1m10 0h1m9 0h1m9 0h1m9 0h1m10 0h1m9 0h1m9 0h1m9 0h1m10 0h1m9 0h1m9 0h1m9 0h1m10 0h1m9 0h1m9 0h1m9 0h1m10 0h1m9 0h1m9 0h1m9 0h1m10 0h1m9 0h1m9 0h1m9 0h1m10 0h1m9 0h1m9 0h1m9 0h1m10 0h1m9 0h1m9 0h1m9 0h1m10 0h1m9 0h1m9 0h1M95 178.5h1m9 0h1m9 0h1m10 0h1m9 0h1m9 0h1m9 0h1m10 0h1m9 0h1m9 0h1m9 0h1m10 0h1m9 0h1m9 0h1m9 0h1m10 0h1m9 0h1m9 0h1m9 0h1m10 0h1m9 0h1m9 0h1m9 0h1m10 0h1m9 0h1m9 0h1m9 0h1m10 0h1m9 0h1m9 0h1m9 0h1m10 0h1m9 0h1m9 0h1m9 0h1m10 0h1m9 0h1m9 0h1m9 0h1m10 0h1m9 0h1m9 0h1m9 0h1m10 0h1m9 0h1m9 0h1m9 0h1m10 0h1m9 0h1m9 0h1m9 0h1m10 0h1m9 0h1m9 0h1m9 0h1m10 0h1m9 0h1m9 0h1m9 0h1m10 0h1m9 0h1m9 0h1m9 0h1m10 0h1m9 0h1m9 0h1m9 0h1m10 0h1m9 0h1m9 0h1m9 0h1m10 0h1m9 0h1m9 0h1m9 0h1m10 0h1m9 0h1m9 0h1m9 0h1m10 0h1m9 0h1m9 0h1m9 0h1m10 0h1m9 0h1m9 0h1m9 0h1m10 0h1m9 0h1m9 0h1m9 0h1m10 0h1m9 0h1m9 0h1m9 0h1m10 0h1m9 0h1m9 0h1m9 0h1m10 0h1m9 0h1m9 0h1M95 168.5h1m9 0h1m9 0h1m10 0h1m9 0h1m9 0h1m9 0h1m10 0h1m9 0h1m9 0h1m9 0h1m10 0h1m9 0h1m9 0h1m9 0h1m10 0h1m9 0h1m9 0h1m9 0h1m10 0h1m9 0h1m9 0h1m9 0h1m10 0h1m9 0h1m9 0h1m9 0h1m10 0h1m9 0h1m9 0h1m9 0h1m10 0h1m9 0h1m9 0h1m9 0h1m10 0h1m9 0h1m9 0h1m9 0h1m10 0h1m9 0h1m9 0h1m9 0h1m10 0h1m9 0h1m9 0h1m9 0h1m10 0h1m9 0h1m9 0h1m9 0h1m10 0h1m9 0h1m9 0h1m9 0h1m10 0h1m9 0h1m9 0h1m9 0h1m10 0h1m9 0h1m9 0h1m9 0h1m10 0h1m9 0h1m9 0h1m9 0h1m10 0h1m9 0h1m9 0h1m9 0h1m10 0h1m9 0h1m9 0h1m9 0h1m10 0h1m9 0h1m9 0h1m9 0h1m10 0h1m9 0h1m9 0h1m9 0h1m10 0h1m9 0h1m9 0h1m9 0h1m10 0h1m9 0h1m9 0h1m9 0h1m10 0h1m9 0h1m9 0h1m9 0h1m10 0h1m9 0h1m9 0h1m9 0h1m10 0h1m9 0h1m9 0h1M95 158.5h1m9 0h1m9 0h1m10 0h1m9 0h1m9 0h1m9 0h1m10 0h1m9 0h1m9 0h1m9 0h1m10 0h1m9 0h1m9 0h1m9 0h1m10 0h1m9 0h1m9 0h1m9 0h1m10 0h1m9 0h1m9 0h1m9 0h1m10 0h1m9 0h1m9 0h1m9 0h1m10 0h1m9 0h1m9 0h1m9 0h1m10 0h1m9 0h1m9 0h1m9 0h1m10 0h1m9 0h1m9 0h1m9 0h1m10 0h1m9 0h1m9 0h1m9 0h1m10 0h1m9 0h1m9 0h1m9 0h1m10 0h1m9 0h1m9 0h1m9 0h1m10 0h1m9 0h1m9 0h1m9 0h1m10 0h1m9 0h1m9 0h1m9 0h1m10 0h1m9 0h1m9 0h1m9 0h1m10 0h1m9 0h1m9 0h1m9 0h1m10 0h1m9 0h1m9 0h1m9 0h1m10 0h1m9 0h1m9 0h1m9 0h1m10 0h1m9 0h1m9 0h1m9 0h1m10 0h1m9 0h1m9 0h1m9 0h1m10 0h1m9 0h1m9 0h1m9 0h1m10 0h1m9 0h1m9 0h1m9 0h1m10 0h1m9 0h1m9 0h1m9 0h1m10 0h1m9 0h1m9 0h1m9 0h1m10 0h1m9 0h1m9 0h1" stroke="#4c4c4c" stroke-width="1" fill="none"/><rect x="146.5" y="270.86" width="922.23" height="358.64" rx="20.49" fill="none" stroke="#fff" stroke-width="2.6"/><g stroke="#b80000" stroke-width="1" fill="none"><circle cx="146.6" cy="629.6" r="5.3"/><path d="M126.5 629.6H166.5M146.6 609.5V649.5"/></g><path d="M186.9 362.9L402.9 362.9" stroke="#d60000" stroke-width="2" stroke-dasharray="17 7.5 2 5.5" stroke-dashoffset="13.5" fill="none"/><path d="M294.9 311.1L294.9 414.7" stroke="#d60000" stroke-width="2" stroke-dasharray="17 7.5 2 5.5" stroke-dashoffset="5.7" fill="none"/><path d="M233.05 327.05H356.75M233.05 398.75H356.75" stroke="#b4b4b4" stroke-width="1.7" fill="none" stroke-dasharray="9.3 2.7 1.5 2.5" stroke-dashoffset="6.95"/><path d="M356.75 327.05A35.85 35.85 0 0 1 356.75 398.75" stroke="#b4b4b4" stroke-width="1.7" fill="none" stroke-dasharray="9.3 2.7 1.5 2.5"/><path d="M233.05 398.75A35.85 35.85 0 0 1 233.05 327.05" stroke="#b4b4b4" stroke-width="1.7" fill="none" stroke-dasharray="9.3 2.7 1.5 2.5"/><circle cx="233.1" cy="362.9" r="7.5" fill="none" stroke="#fff" stroke-width="2.6"/><circle cx="356.4" cy="362.9" r="7.5" fill="none" stroke="#fff" stroke-width="2.6"/><path d="M255.4 337.5H334.2A10 10 0 0 1 344.1 348.8L340.3 378A11 11 0 0 1 329.5 388.4H260.1A11 11 0 0 1 249.3 378L245.5 348.8A10 10 0 0 1 255.4 337.5Z" fill="none" stroke="#fff" stroke-width="2.6"/><path d="M414.6 362.8L523.4 362.8" stroke="#d60000" stroke-width="2" stroke-dasharray="17 7.5 2 5.5" stroke-dashoffset="3.1" fill="none"/><path d="M469 311.1L469 414.5" stroke="#d60000" stroke-width="2" stroke-dasharray="17 7.5 2 5.5" stroke-dashoffset="5.8" fill="none"/><circle cx="469" cy="362.8" r="38.2" fill="none" stroke="#fff" stroke-width="2.6"/><path d="M545.3 362.9L607.9 362.9" stroke="#d60000" stroke-width="2" stroke-dasharray="17 7.5 2 5.5" stroke-dashoffset="9.2" fill="none"/><path d="M576.6 331.6L576.6 394.2" stroke="#d60000" stroke-width="2" stroke-dasharray="17 7.5 2 5.5" stroke-dashoffset="9.2" fill="none"/><circle cx="576.6" cy="362.9" r="18" fill="none" stroke="#fff" stroke-width="2.6"/><path d="M176.2 526.9L567.2 526.9" stroke="#d60000" stroke-width="2" stroke-dasharray="17 7.5 2 5.5" stroke-dashoffset="5" fill="none"/><path d="M371.7 455.4L371.7 598.4" stroke="#d60000" stroke-width="2" stroke-dasharray="17 7.5 2 5.5" stroke-dashoffset="1" fill="none"/><path d="M251.15 472.45H492.25M251.15 581.35H492.25" stroke="#b4b4b4" stroke-width="1.7" fill="none" stroke-dasharray="9.3 2.7 1.5 2.5" stroke-dashoffset="4.15"/><path d="M492.25 472.45A54.45 54.45 0 0 1 492.25 581.35" stroke="#b4b4b4" stroke-width="1.7" fill="none" stroke-dasharray="9.3 2.7 1.5 2.5"/><path d="M251.15 581.35A54.45 54.45 0 0 1 251.15 472.45" stroke="#b4b4b4" stroke-width="1.7" fill="none" stroke-dasharray="9.3 2.7 1.5 2.5"/><circle cx="234" cy="526.9" r="16" fill="none" stroke="#fff" stroke-width="2.6"/><circle cx="509.4" cy="526.9" r="16" fill="none" stroke="#fff" stroke-width="2.6"/><path d="M288.2 494.4H455.2V543.8H439.3L425.9 559.6H317.5L304.1 543.8H288.2Z" fill="none" stroke="#fff" stroke-width="2.6" stroke-linejoin="miter"/><circle cx="669.1" cy="332.34" r="6.9" fill="none" stroke="#fff" stroke-width="2.6"/><circle cx="699.84" cy="332.34" r="6.9" fill="none" stroke="#fff" stroke-width="2.6"/><circle cx="730.58" cy="332.34" r="6.9" fill="none" stroke="#fff" stroke-width="2.6"/><circle cx="761.32" cy="332.34" r="6.9" fill="none" stroke="#fff" stroke-width="2.6"/><circle cx="792.06" cy="332.34" r="6.9" fill="none" stroke="#fff" stroke-width="2.6"/><circle cx="822.8" cy="332.34" r="6.9" fill="none" stroke="#fff" stroke-width="2.6"/><circle cx="853.54" cy="332.34" r="6.9" fill="none" stroke="#fff" stroke-width="2.6"/><circle cx="884.28" cy="332.34" r="6.9" fill="none" stroke="#fff" stroke-width="2.6"/><circle cx="915.02" cy="332.34" r="6.9" fill="none" stroke="#fff" stroke-width="2.6"/><circle cx="945.77" cy="332.34" r="6.9" fill="none" stroke="#fff" stroke-width="2.6"/><circle cx="976.51" cy="332.34" r="6.9" fill="none" stroke="#fff" stroke-width="2.6"/><circle cx="1007.25" cy="332.34" r="6.9" fill="none" stroke="#fff" stroke-width="2.6"/><circle cx="684.47" cy="352.83" r="6.9" fill="none" stroke="#fff" stroke-width="2.6"/><circle cx="715.21" cy="352.83" r="6.9" fill="none" stroke="#fff" stroke-width="2.6"/><circle cx="745.95" cy="352.83" r="6.9" fill="none" stroke="#fff" stroke-width="2.6"/><circle cx="776.69" cy="352.83" r="6.9" fill="none" stroke="#fff" stroke-width="2.6"/><circle cx="807.43" cy="352.83" r="6.9" fill="none" stroke="#fff" stroke-width="2.6"/><circle cx="838.17" cy="352.83" r="6.9" fill="none" stroke="#fff" stroke-width="2.6"/><circle cx="868.91" cy="352.83" r="6.9" fill="none" stroke="#fff" stroke-width="2.6"/><circle cx="899.65" cy="352.83" r="6.9" fill="none" stroke="#fff" stroke-width="2.6"/><circle cx="930.4" cy="352.83" r="6.9" fill="none" stroke="#fff" stroke-width="2.6"/><circle cx="961.14" cy="352.83" r="6.9" fill="none" stroke="#fff" stroke-width="2.6"/><circle cx="991.88" cy="352.83" r="6.9" fill="none" stroke="#fff" stroke-width="2.6"/><circle cx="669.1" cy="373.32" r="6.9" fill="none" stroke="#fff" stroke-width="2.6"/><circle cx="699.84" cy="373.32" r="6.9" fill="none" stroke="#fff" stroke-width="2.6"/><circle cx="730.58" cy="373.32" r="6.9" fill="none" stroke="#fff" stroke-width="2.6"/><circle cx="761.32" cy="373.32" r="6.9" fill="none" stroke="#fff" stroke-width="2.6"/><circle cx="792.06" cy="373.32" r="6.9" fill="none" stroke="#fff" stroke-width="2.6"/><circle cx="822.8" cy="373.32" r="6.9" fill="none" stroke="#fff" stroke-width="2.6"/><circle cx="853.54" cy="373.32" r="6.9" fill="none" stroke="#fff" stroke-width="2.6"/><circle cx="884.28" cy="373.32" r="6.9" fill="none" stroke="#fff" stroke-width="2.6"/><circle cx="915.02" cy="373.32" r="6.9" fill="none" stroke="#fff" stroke-width="2.6"/><circle cx="945.77" cy="373.32" r="6.9" fill="none" stroke="#fff" stroke-width="2.6"/><circle cx="976.51" cy="373.32" r="6.9" fill="none" stroke="#fff" stroke-width="2.6"/><circle cx="1007.25" cy="373.32" r="6.9" fill="none" stroke="#fff" stroke-width="2.6"/><circle cx="684.47" cy="393.82" r="6.9" fill="none" stroke="#fff" stroke-width="2.6"/><circle cx="715.21" cy="393.82" r="6.9" fill="none" stroke="#fff" stroke-width="2.6"/><circle cx="745.95" cy="393.82" r="6.9" fill="none" stroke="#fff" stroke-width="2.6"/><circle cx="776.69" cy="393.82" r="6.9" fill="none" stroke="#fff" stroke-width="2.6"/><circle cx="807.43" cy="393.82" r="6.9" fill="none" stroke="#fff" stroke-width="2.6"/><circle cx="838.17" cy="393.82" r="6.9" fill="none" stroke="#fff" stroke-width="2.6"/><circle cx="868.91" cy="393.82" r="6.9" fill="none" stroke="#fff" stroke-width="2.6"/><circle cx="899.65" cy="393.82" r="6.9" fill="none" stroke="#fff" stroke-width="2.6"/><circle cx="930.4" cy="393.82" r="6.9" fill="none" stroke="#fff" stroke-width="2.6"/><circle cx="961.14" cy="393.82" r="6.9" fill="none" stroke="#fff" stroke-width="2.6"/><circle cx="991.88" cy="393.82" r="6.9" fill="none" stroke="#fff" stroke-width="2.6"/><circle cx="669.1" cy="414.31" r="6.9" fill="none" stroke="#fff" stroke-width="2.6"/><circle cx="699.84" cy="414.31" r="6.9" fill="none" stroke="#fff" stroke-width="2.6"/><circle cx="730.58" cy="414.31" r="6.9" fill="none" stroke="#fff" stroke-width="2.6"/><circle cx="761.32" cy="414.31" r="6.9" fill="none" stroke="#fff" stroke-width="2.6"/><circle cx="792.06" cy="414.31" r="6.9" fill="none" stroke="#fff" stroke-width="2.6"/><circle cx="822.8" cy="414.31" r="6.9" fill="none" stroke="#fff" stroke-width="2.6"/><circle cx="853.54" cy="414.31" r="6.9" fill="none" stroke="#fff" stroke-width="2.6"/><circle cx="884.28" cy="414.31" r="6.9" fill="none" stroke="#fff" stroke-width="2.6"/><circle cx="915.02" cy="414.31" r="6.9" fill="none" stroke="#fff" stroke-width="2.6"/><circle cx="945.77" cy="414.31" r="6.9" fill="none" stroke="#fff" stroke-width="2.6"/><circle cx="976.51" cy="414.31" r="6.9" fill="none" stroke="#fff" stroke-width="2.6"/><circle cx="1007.25" cy="414.31" r="6.9" fill="none" stroke="#fff" stroke-width="2.6"/><circle cx="684.47" cy="434.81" r="6.9" fill="none" stroke="#fff" stroke-width="2.6"/><circle cx="715.21" cy="434.81" r="6.9" fill="none" stroke="#fff" stroke-width="2.6"/><circle cx="745.95" cy="434.81" r="6.9" fill="none" stroke="#fff" stroke-width="2.6"/><circle cx="776.69" cy="434.81" r="6.9" fill="none" stroke="#fff" stroke-width="2.6"/><circle cx="807.43" cy="434.81" r="6.9" fill="none" stroke="#fff" stroke-width="2.6"/><circle cx="838.17" cy="434.81" r="6.9" fill="none" stroke="#fff" stroke-width="2.6"/><circle cx="868.91" cy="434.81" r="6.9" fill="none" stroke="#fff" stroke-width="2.6"/><circle cx="899.65" cy="434.81" r="6.9" fill="none" stroke="#fff" stroke-width="2.6"/><circle cx="930.4" cy="434.81" r="6.9" fill="none" stroke="#fff" stroke-width="2.6"/><circle cx="961.14" cy="434.81" r="6.9" fill="none" stroke="#fff" stroke-width="2.6"/><circle cx="991.88" cy="434.81" r="6.9" fill="none" stroke="#fff" stroke-width="2.6"/><circle cx="669.1" cy="455.3" r="6.9" fill="none" stroke="#fff" stroke-width="2.6"/><circle cx="699.84" cy="455.3" r="6.9" fill="none" stroke="#fff" stroke-width="2.6"/><circle cx="730.58" cy="455.3" r="6.9" fill="none" stroke="#fff" stroke-width="2.6"/><circle cx="761.32" cy="455.3" r="6.9" fill="none" stroke="#fff" stroke-width="2.6"/><circle cx="792.06" cy="455.3" r="6.9" fill="none" stroke="#fff" stroke-width="2.6"/><circle cx="822.8" cy="455.3" r="6.9" fill="none" stroke="#fff" stroke-width="2.6"/><circle cx="684.47" cy="475.8" r="6.9" fill="none" stroke="#fff" stroke-width="2.6"/><circle cx="715.21" cy="475.8" r="6.9" fill="none" stroke="#fff" stroke-width="2.6"/><circle cx="745.95" cy="475.8" r="6.9" fill="none" stroke="#fff" stroke-width="2.6"/><circle cx="776.69" cy="475.8" r="6.9" fill="none" stroke="#fff" stroke-width="2.6"/><circle cx="807.43" cy="475.8" r="6.9" fill="none" stroke="#fff" stroke-width="2.6"/><circle cx="669.1" cy="496.29" r="6.9" fill="none" stroke="#fff" stroke-width="2.6"/><circle cx="699.84" cy="496.29" r="6.9" fill="none" stroke="#fff" stroke-width="2.6"/><circle cx="730.58" cy="496.29" r="6.9" fill="none" stroke="#fff" stroke-width="2.6"/><circle cx="761.32" cy="496.29" r="6.9" fill="none" stroke="#fff" stroke-width="2.6"/><circle cx="792.06" cy="496.29" r="6.9" fill="none" stroke="#fff" stroke-width="2.6"/><circle cx="822.8" cy="496.29" r="6.9" fill="none" stroke="#fff" stroke-width="2.6"/><circle cx="684.47" cy="516.78" r="6.9" fill="none" stroke="#fff" stroke-width="2.6"/><circle cx="715.21" cy="516.78" r="6.9" fill="none" stroke="#fff" stroke-width="2.6"/><circle cx="745.95" cy="516.78" r="6.9" fill="none" stroke="#fff" stroke-width="2.6"/><circle cx="776.69" cy="516.78" r="6.9" fill="none" stroke="#fff" stroke-width="2.6"/><circle cx="807.43" cy="516.78" r="6.9" fill="none" stroke="#fff" stroke-width="2.6"/><circle cx="669.1" cy="537.28" r="6.9" fill="none" stroke="#fff" stroke-width="2.6"/><circle cx="699.84" cy="537.28" r="6.9" fill="none" stroke="#fff" stroke-width="2.6"/><circle cx="730.58" cy="537.28" r="6.9" fill="none" stroke="#fff" stroke-width="2.6"/><circle cx="761.32" cy="537.28" r="6.9" fill="none" stroke="#fff" stroke-width="2.6"/><circle cx="792.06" cy="537.28" r="6.9" fill="none" stroke="#fff" stroke-width="2.6"/><circle cx="822.8" cy="537.28" r="6.9" fill="none" stroke="#fff" stroke-width="2.6"/><circle cx="684.47" cy="557.77" r="6.9" fill="none" stroke="#fff" stroke-width="2.6"/><circle cx="715.21" cy="557.77" r="6.9" fill="none" stroke="#fff" stroke-width="2.6"/><circle cx="745.95" cy="557.77" r="6.9" fill="none" stroke="#fff" stroke-width="2.6"/><circle cx="776.69" cy="557.77" r="6.9" fill="none" stroke="#fff" stroke-width="2.6"/><circle cx="807.43" cy="557.77" r="6.9" fill="none" stroke="#fff" stroke-width="2.6"/><circle cx="669.1" cy="578.26" r="6.9" fill="none" stroke="#fff" stroke-width="2.6"/><circle cx="699.84" cy="578.26" r="6.9" fill="none" stroke="#fff" stroke-width="2.6"/><circle cx="730.58" cy="578.26" r="6.9" fill="none" stroke="#fff" stroke-width="2.6"/><circle cx="761.32" cy="578.26" r="6.9" fill="none" stroke="#fff" stroke-width="2.6"/><circle cx="792.06" cy="578.26" r="6.9" fill="none" stroke="#fff" stroke-width="2.6"/><circle cx="822.8" cy="578.26" r="6.9" fill="none" stroke="#fff" stroke-width="2.6"/><path d="M844.8 521.8L1030.8 521.8" stroke="#d60000" stroke-width="2" stroke-dasharray="17 7.5 2 5.5" stroke-dashoffset="11.5" fill="none"/><path d="M937.8 453.6L937.8 590" stroke="#d60000" stroke-width="2" stroke-dasharray="17 7.5 2 5.5" stroke-dashoffset="25.1" fill="none"/><rect x="858.7" y="465.6" width="159.1" height="112" rx="20" fill="none" stroke="#fff" stroke-width="2.6"/><rect x="914.7" y="500.7" width="51.5" height="56" fill="#00ff00" fill-opacity="0.3" stroke="#c00000" stroke-width="1.5" stroke-dasharray="6 3"/><defs><radialGradient id="rg" cx="0.5" cy="0.5" r="0.5"><stop offset="0.74" stop-color="#304050" stop-opacity="0"/><stop offset="0.8" stop-color="#405060" stop-opacity="0.55"/><stop offset="0.88" stop-color="#8090a4" stop-opacity="0.75"/><stop offset="0.95" stop-color="#a8b8c8" stop-opacity="0.8"/><stop offset="1" stop-color="#8898a8" stop-opacity="0"/></radialGradient></defs><circle cx="914.7" cy="556.7" r="40" fill="url(#rg)"/><g transform="translate(914.9 556.7) scale(1.25)"><path d="M0 0V17.5L4 13.8L7 20.5L10 19.2L7.2 12.6H12.8Z" fill="#fff" stroke="#fff" stroke-width="2.6" stroke-linejoin="round"/><path d="M0 0V17.5L4 13.8L7 20.5L10 19.2L7.2 12.6H12.8Z" fill="#fff" stroke="#000" stroke-width="0.9" stroke-linejoin="round"/></g></svg><path d="M86 551L92 556.5L86 562Z" fill="#000"/><path d="M909 145H921L915 151Z" fill="#000"/></svg><svg class="a" style="left:94px;top:111px" width="16" height="16" viewBox="0 0 16 16"><circle cx="8" cy="7.6" r="5.4" fill="#f6f6f6" stroke="#23388a" stroke-width="2.3"/><path d="M5.5 9.2H9M7.5 5V9" stroke="#d08888" stroke-width="0.6"/><path d="M8.6 8.3L12.6 12.6" stroke="#f0a020" stroke-width="2.3"/><circle cx="13.3" cy="13.4" r="1.2" fill="#e06060"/></svg><div class="a" style="left:72px;top:750px;width:1081px;height:21px;background:#fff;border-bottom:1px solid #c6c6c6;border-right:1px solid #c6c6c6"></div><div class="st" style="left:77px;top:751px;font-size:13.5px;color:#0000d6;letter-spacing:0"><i>Opdracht:</i> new</div><div class="a" style="left:72px;top:771px;width:1082px;height:28px;background:#ececec"></div><div class="st" style="left:73px;top:777px;font-size:13.4px;color:#111;letter-spacing:0">Tweede hoekpunt:</div><div class="a" style="left:187px;top:776px;width:938px;height:18px;background:#fff"></div><div class="a" style="left:1127px;top:772px;width:26px;height:26px;border:1px solid #bdbdbd;background:linear-gradient(#f6f6f6,#e9e9e9)"></div><div class="a" style="left:1133px;top:780px;width:14px;height:10px;border:1.2px solid #222;border-top:2.5px solid #111;background:#f4f4f4"></div><div class="a" style="left:1153px;top:108px;width:3px;height:691px;background:#dedede;border-left:1px solid #c8c8c8;border-right:1px solid #cfcfcf"></div><div class="a" style="left:1155px;top:108px;width:299px;height:22px;background:linear-gradient(#ececec,#dedede)"></div><div class="st" style="left:1297px;top:111px;font-size:12.6px;color:#1a1a1a;letter-spacing:0">Lagenlijst</div><div class="a" style="left:1155px;top:130px;width:61px;height:27px;border:1px solid #ababab;border-bottom:2px solid #a8a8a8;background:linear-gradient(#fbfbfb,#ececec)"></div><div class="a" style="left:1215px;top:130px;width:61px;height:27px;border:1px solid #ababab;border-bottom:2px solid #a8a8a8;background:linear-gradient(#fbfbfb,#ececec)"></div><div class="a" style="left:1275px;top:130px;width:61px;height:27px;border:1px solid #ababab;border-bottom:2px solid #a8a8a8;background:linear-gradient(#fbfbfb,#ececec)"></div><div class="a" style="left:1335px;top:130px;width:61px;height:27px;border:1px solid #ababab;border-bottom:2px solid #a8a8a8;background:linear-gradient(#fbfbfb,#ececec)"></div><div class="a" style="left:1395px;top:130px;width:60px;height:27px;border:1px solid #ababab;border-bottom:2px solid #a8a8a8;background:linear-gradient(#fbfbfb,#ececec)"></div><div class="a" style="left:1155px;top:157px;width:299px;height:642px;background:#fff"></div><div class="a" style="left:1161px;top:163px;width:16px;height:9px;background:#000;border:1px solid #222"></div><div class="st" style="left:1183px;top:159px;font-size:13.5px;color:#111;letter-spacing:0">0</div><div class="a" style="left:1161px;top:183px;width:16px;height:9px;background:#f00;border:1px solid #222"></div><div class="st" style="left:1183px;top:179px;font-size:13.5px;color:#111;letter-spacing:0">Midden</div><div class="a" style="left:1161px;top:203px;width:16px;height:9px;background:#a0a0a4;border:1px solid #222"></div><div class="st" style="left:1183px;top:199px;font-size:13.5px;color:#111;letter-spacing:0">Terug</div><div class="a" style="left:1161px;top:223px;width:16px;height:9px;background:#000;border:1px solid #222"></div><div class="st" style="left:1183px;top:219px;font-size:13.5px;color:#111;letter-spacing:0">Ventilatie</div><svg class="a" style="left:1155px;top:108px" width="345" height="400" viewBox="1155 108 345 400"><circle cx="1164" cy="118.2" r="7" fill="#6a6a6a"/><path d="M1161 115.2L1167 121.2M1167 115.2L1161 121.2" stroke="#fff" stroke-width="1.8"/><circle cx="1182" cy="118.2" r="7" fill="#6a6a6a"/><rect x="1178.5" y="116.5" width="5" height="4.5" fill="none" stroke="#fff" stroke-width="1"/><path d="M1180.5 116.5V114.5H1185.5V119H1183.5" fill="none" stroke="#fff" stroke-width="1"/><g transform="translate(1185 142.5) scale(1.0)"><path d="M-8.5 0.5C-4.5 -6.5 4.5 -6.5 8.5 0.5C4.5 6.5 -4.5 6.5 -8.5 0.5Z" fill="#000"/><path d="M-5.5 0.8C-3 -3 3 -3 5.5 0.8C3 3.8 -3 3.8 -5.5 0.8Z" fill="#fff"/><circle cx="0" cy="0.3" r="3" fill="#000"/><circle cx="-0.8" cy="-0.8" r="0.9" fill="#fff"/></g><g transform="translate(1245 142.5) scale(1.0)"><path d="M-8.5 0.5C-4.5 -6.5 4.5 -6.5 8.5 0.5C4.5 6.5 -4.5 6.5 -8.5 0.5Z" fill="#a8a8a8"/><path d="M-5.5 0.8C-3 -3 3 -3 5.5 0.8C3 3.8 -3 3.8 -5.5 0.8Z" fill="#fff"/><circle cx="0" cy="0.3" r="3" fill="#a8a8a8"/><circle cx="-0.8" cy="-0.8" r="0.9" fill="#fff"/></g><path d="M1304 136.5V148.5M1298 142.5H1310" stroke="#e00000" stroke-width="3"/><path d="M1358 142.5H1370" stroke="#e00000" stroke-width="3"/><path d="M1419 150L1431 137.5" stroke="#7a5010" stroke-width="3.8" stroke-linecap="butt"/><path d="M1419 150L1431 137.5" stroke="#e8b040" stroke-width="2.6"/><path d="M1429.7 138.8L1431.4 137.1" stroke="#e02020" stroke-width="2.8"/><g transform="translate(1423 166.7) scale(0.95)"><path d="M-8.5 0.5C-4.5 -6.5 4.5 -6.5 8.5 0.5C4.5 6.5 -4.5 6.5 -8.5 0.5Z" fill="#000"/><path d="M-5.5 0.8C-3 -3 3 -3 5.5 0.8C3 3.8 -3 3.8 -5.5 0.8Z" fill="#fff"/><circle cx="0" cy="0.3" r="3" fill="#000"/><circle cx="-0.8" cy="-0.8" r="0.9" fill="#fff"/></g><rect x="1440" y="167.0" width="10" height="7.5" fill="#bdbdbd"/><path d="M1441.5 167.5V164.0A3.5 3.5 0 0 1 1448.5 164.0V167.5" fill="none" stroke="#bdbdbd" stroke-width="1.6"/><g transform="translate(1423 186.7) scale(0.95)"><path d="M-8.5 0.5C-4.5 -6.5 4.5 -6.5 8.5 0.5C4.5 6.5 -4.5 6.5 -8.5 0.5Z" fill="#000"/><path d="M-5.5 0.8C-3 -3 3 -3 5.5 0.8C3 3.8 -3 3.8 -5.5 0.8Z" fill="#fff"/><circle cx="0" cy="0.3" r="3" fill="#000"/><circle cx="-0.8" cy="-0.8" r="0.9" fill="#fff"/></g><rect x="1440" y="187.0" width="10" height="7.5" fill="#bdbdbd"/><path d="M1441.5 187.5V184.0A3.5 3.5 0 0 1 1448.5 184.0V187.5" fill="none" stroke="#bdbdbd" stroke-width="1.6"/><g transform="translate(1423 206.7) scale(0.95)"><path d="M-8.5 0.5C-4.5 -6.5 4.5 -6.5 8.5 0.5C4.5 6.5 -4.5 6.5 -8.5 0.5Z" fill="#000"/><path d="M-5.5 0.8C-3 -3 3 -3 5.5 0.8C3 3.8 -3 3.8 -5.5 0.8Z" fill="#fff"/><circle cx="0" cy="0.3" r="3" fill="#000"/><circle cx="-0.8" cy="-0.8" r="0.9" fill="#fff"/></g><rect x="1440" y="207.0" width="10" height="7.5" fill="#bdbdbd"/><path d="M1441.5 207.5V204.0A3.5 3.5 0 0 1 1448.5 204.0V207.5" fill="none" stroke="#bdbdbd" stroke-width="1.6"/><g transform="translate(1423 226.7) scale(0.95)"><path d="M-8.5 0.5C-4.5 -6.5 4.5 -6.5 8.5 0.5C4.5 6.5 -4.5 6.5 -8.5 0.5Z" fill="#000"/><path d="M-5.5 0.8C-3 -3 3 -3 5.5 0.8C3 3.8 -3 3.8 -5.5 0.8Z" fill="#fff"/><circle cx="0" cy="0.3" r="3" fill="#000"/><circle cx="-0.8" cy="-0.8" r="0.9" fill="#fff"/></g><rect x="1440" y="227.0" width="10" height="7.5" fill="#bdbdbd"/><path d="M1441.5 227.5V224.0A3.5 3.5 0 0 1 1448.5 224.0V227.5" fill="none" stroke="#bdbdbd" stroke-width="1.6"/><path d="M1395 216L1407 203.5" stroke="#7a5010" stroke-width="3.8" stroke-linecap="butt"/><path d="M1395 216L1407 203.5" stroke="#e8b040" stroke-width="2.6"/><path d="M1405.7 204.8L1407.4 203.1" stroke="#e02020" stroke-width="2.8"/></svg><div class="a" style="left:1454px;top:108px;width:46px;height:691px;background:linear-gradient(90deg,#d0d0d0 0,#ececec 6%,#e0e0e0 50%,#c4c4c4 100%)"></div><div class="a" style="left:1462px;top:116px;width:30px;height:2px;background:repeating-linear-gradient(90deg,#a4a4a4 0 2px,transparent 2px 6px)"></div><div class="a" style="left:1456px;top:261px;width:44px;height:1px;background:repeating-linear-gradient(90deg,#777 0 1px,transparent 1px 3px)"></div><div class="a" style="left:1456px;top:409px;width:44px;height:1px;background:repeating-linear-gradient(90deg,#777 0 1px,transparent 1px 3px)"></div><div class="a" style="left:1456px;top:120px;width:44px;height:43px;background:#b5b5b5;border-radius:6px 0 0 6px"></div><div class="a" style="left:1456px;top:417px;width:44px;height:43px;background:#b5b5b5;border-radius:6px 0 0 6px"></div><svg class="a" style="left:1454px;top:108px" width="46" height="400" viewBox="1454 108 46 400"><rect x="1463.5" y="127.5" width="27" height="27" fill="#fff" stroke="#222" stroke-width="1"/><rect x="1463.5" y="127.5" width="27" height="4.5" fill="#000"/><rect x="1465" y="128.5" width="3" height="3" fill="#fff"/><rect x="1463.5" y="174.5" width="27" height="27" fill="#fff" stroke="#222" stroke-width="1"/><rect x="1463.5" y="174.5" width="27" height="4.5" fill="#000"/><rect x="1465" y="175.5" width="3" height="3" fill="#fff"/><rect x="1463.5" y="220.5" width="27" height="27" fill="#fff" stroke="#222" stroke-width="1"/><rect x="1463.5" y="220.5" width="27" height="4.5" fill="#000"/><rect x="1465" y="221.5" width="3" height="3" fill="#fff"/><rect x="1463.5" y="276" width="27" height="27" fill="#fff" stroke="#222" stroke-width="1"/><rect x="1463.5" y="276" width="27" height="4.5" fill="#000"/><rect x="1465" y="277" width="3" height="3" fill="#fff"/><rect x="1463.5" y="322" width="27" height="27" fill="#fff" stroke="#222" stroke-width="1"/><rect x="1463.5" y="322" width="27" height="4.5" fill="#000"/><rect x="1465" y="323" width="3" height="3" fill="#fff"/><rect x="1463.5" y="368.5" width="27" height="27" fill="#fff" stroke="#222" stroke-width="1"/><rect x="1463.5" y="368.5" width="27" height="4.5" fill="#000"/><rect x="1465" y="369.5" width="3" height="3" fill="#fff"/><rect x="1463.5" y="424.5" width="27" height="27" fill="#fff" stroke="#222" stroke-width="1"/><rect x="1463.5" y="424.5" width="27" height="4.5" fill="#000"/><rect x="1465" y="425.5" width="3" height="3" fill="#fff"/><rect x="1463.5" y="471" width="27" height="27" fill="#fff" stroke="#222" stroke-width="1"/><rect x="1463.5" y="471" width="27" height="4.5" fill="#000"/><rect x="1465" y="472" width="3" height="3" fill="#fff"/><path d="M1472 140L1480 136V148L1472 152Z" fill="#aaa" stroke="#333" stroke-width="0.6"/><path d="M1475 139L1485 135V147L1475 151Z" fill="#fff" stroke="#333" stroke-width="0.6"/><path d="M1478 146L1482 139M1479 144H1482" stroke="#e03030" stroke-width="0.8"/><rect x="1469" y="185" width="11" height="8" fill="#f4ecc8" stroke="#555" stroke-width="0.7"/><circle cx="1481" cy="192" r="5" fill="#f4ecc8" fill-opacity="0.8" stroke="#555" stroke-width="0.7"/><rect x="1469" y="231" width="16" height="10" rx="2" fill="#f2f4f8" stroke="#b8c8e0" stroke-width="1"/><rect x="1467" y="284.0" width="3.5" height="3" fill="#000"/><rect x="1473" y="284.0" width="13" height="3" fill="#fff" stroke="#333" stroke-width="0.6"/><rect x="1467" y="289.5" width="3.5" height="3" fill="#000"/><rect x="1473" y="289.5" width="13" height="3" fill="#fff" stroke="#333" stroke-width="0.6"/><rect x="1467" y="295.0" width="3.5" height="3" fill="#000"/><rect x="1473" y="295.0" width="13" height="3" fill="#fff" stroke="#333" stroke-width="0.6"/><path d="M1469 331H1485L1479 337V345L1476 347V337Z" fill="#8a8a8a" stroke="#333" stroke-width="0.6"/><path d="M1468 377L1474 380V388L1468 391Z" fill="#fff" stroke="#333" stroke-width="0.7"/><rect x="1474" y="380" width="10" height="8" fill="#8a8a8a"/><path d="M1466 384H1488" stroke="#f09090" stroke-width="0.7"/><path d="M1466 434H1488M1466 437H1486M1466 440H1484M1466 443H1486" stroke="#999" stroke-width="0.6"/><path d="M1463.5 446.5H1490.5" stroke="#333" stroke-width="0.6"/><rect x="1469.5" y="480.5" width="15" height="16" rx="1" fill="#c4892c" stroke="#8a5a10" stroke-width="0.5"/><rect x="1471.5" y="483" width="11" height="12" fill="#fafafa"/><rect x="1473.5" y="479" width="7" height="3" rx="1" fill="#888"/><path d="M1473 486H1481M1473 488H1481M1473 490H1480" stroke="#bbb" stroke-width="0.6"/></svg><div class="a" style="left:0;top:799px;width:1500px;height:45px;background:#dcdcdc"></div><div class="st" style="left:2px;top:807px">75,7.0732</div><div class="st" style="left:2px;top:827px">@75,7.0732</div><div class="a" style="left:253px;top:802px;width:1px;height:39px;background:#8a8a8a"></div><div class="st" style="left:256px;top:807px">75.3328&lt;5.39°</div><div class="st" style="left:256px;top:827px">@75.3328&lt;5.39°</div><div class="a" style="left:506px;top:818px;width:7px;height:7px;border-radius:50%;background:#c6c6c6"></div><div class="a" style="left:939px;top:818px;width:7px;height:7px;border-radius:50%;background:#c6c6c6"></div><div class="a" style="left:1269px;top:818px;width:7px;height:7px;border-radius:50%;background:#c6c6c6"></div><div class="st" style="left:619px;top:817.5px;letter-spacing:0.05px">Tweede hoekpunt</div><div class="st" style="left:948px;top:817px">Geen objecten geselecteerd.</div><svg class="a" style="left:716px;top:805px" width="20" height="32" viewBox="0 0 20 32"><rect x="1.5" y="1" width="17" height="29.5" rx="8.5" fill="#fff" stroke="#333" stroke-width="0.9"/><path d="M1.5 14.3Q10 12.3 18.5 14.3M10 1V13.3" stroke="#333" stroke-width="0.9" fill="none"/><rect x="8.5" y="3.5" width="3" height="7.5" rx="1.5" fill="#fff" stroke="#333" stroke-width="0.8"/></svg></body></html>
